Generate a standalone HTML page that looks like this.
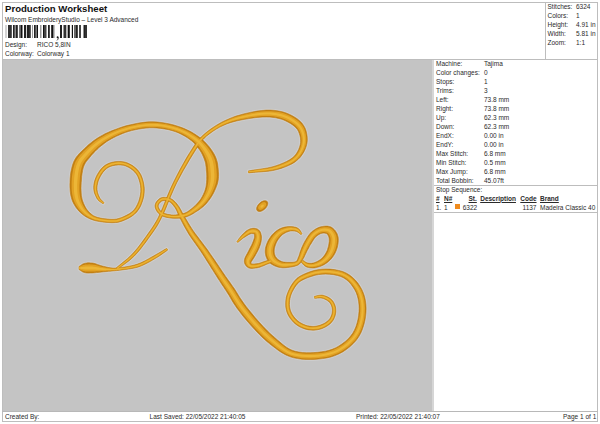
<!DOCTYPE html>
<html><head><meta charset="utf-8">
<style>
html,body{margin:0;padding:0;background:#fff;width:600px;height:424px;overflow:hidden;position:relative;font-family:"Liberation Sans",sans-serif;color:#2a2a2a}
.t{position:absolute;line-height:1;white-space:pre;font-size:6.5px}
.ln{position:absolute;background:#bdbdbd}
.u{text-decoration:underline;font-weight:bold}
</style></head><body>
<!-- lines -->
<div class="ln" style="left:2px;top:2px;width:596px;height:1px"></div>
<div class="ln" style="left:2px;top:421px;width:596px;height:1px"></div>
<div class="ln" style="left:2px;top:2px;width:1px;height:420px"></div>
<div class="ln" style="left:597px;top:2px;width:1px;height:420px"></div>
<div class="ln" style="left:545px;top:2px;width:1px;height:57px"></div>
<div class="ln" style="left:2px;top:59px;width:596px;height:1px"></div>
<div class="ln" style="left:434px;top:185px;width:164px;height:1px"></div>
<div class="ln" style="left:434px;top:212px;width:164px;height:1px"></div>
<div class="ln" style="left:2px;top:411px;width:596px;height:1px;background:#b8b8b8"></div>
<!-- gray design area -->
<div style="position:absolute;left:432px;top:60px;width:2px;height:351px;background:#d6d6d6"></div>
<div style="position:absolute;left:3px;top:60px;width:429px;height:351px;background:#c4c4c4;overflow:hidden">
<svg width="429" height="351" viewBox="3 60 429 351" style="position:absolute;left:0;top:0">
<g fill="#cfcfcf" stroke="#cfcfcf" stroke-width="2.6" stroke-linejoin="round"><path d="M104.1 202.6L103.3 201.9L102.5 201.2L101.8 200.5L101.1 199.8L100.5 199.1L99.9 198.3L99.3 197.0L98.6 195.6L98.0 194.1L97.5 192.5L97.2 190.9L97.0 189.4L97.0 187.6L97.1 185.8L97.5 183.9L97.9 182.1L98.5 180.2L99.3 178.4L100.3 176.4L101.6 174.3L103.0 172.2L104.6 170.4L106.3 168.8L108.1 167.5L110.2 166.5L112.7 165.7L115.4 165.2L118.2 164.9L120.9 165.0L123.3 165.3L125.7 166.0L128.1 167.1L130.5 168.5L132.8 170.2L134.7 172.0L136.4 174.0L137.8 176.4L138.9 179.2L139.8 182.3L140.5 185.5L140.8 188.7L140.8 191.8L140.4 194.9L139.7 198.1L138.7 201.4L137.4 204.4L135.9 207.3L134.2 209.7L132.1 211.7L129.7 213.5L126.9 215.1L124.0 216.5L121.2 217.7L118.5 218.5L116.7 219.0L114.9 219.2L113.1 219.3L111.2 219.3L109.3 219.2L107.3 219.0L105.0 218.8L102.7 218.5L100.3 218.0L97.9 217.5L95.8 216.8L93.8 215.9L92.3 214.9L90.9 213.8L89.5 212.6L88.3 211.3L87.2 209.9L86.2 208.5L85.2 206.8L84.3 205.1L83.5 203.2L82.8 201.3L82.2 199.4L81.8 197.6L81.4 195.4L81.2 193.1L81.1 190.7L81.0 188.1L81.1 185.4L81.2 182.8L81.5 179.8L81.7 176.6L82.1 173.5L82.6 170.6L83.2 167.9L84.0 165.7L84.6 164.4L85.3 163.1L86.1 161.8L87.2 160.4L88.4 159.0L89.7 157.4L91.3 155.4L93.1 153.4L95.0 151.5L97.0 149.5L99.0 147.6L101.0 145.9L103.0 144.4L104.9 142.9L106.9 141.5L109.0 140.2L111.2 138.9L113.5 137.7L116.3 136.3L119.2 135.0L122.2 133.7L125.3 132.5L128.5 131.5L131.7 130.6L135.2 129.8L138.8 129.1L142.4 128.5L146.0 128.1L149.6 127.8L153.2 127.8L157.0 128.0L160.8 128.4L164.7 129.0L168.6 129.7L172.3 130.7L175.7 131.8L178.7 133.0L181.6 134.4L184.4 135.9L187.1 137.6L189.5 139.3L191.8 141.0L193.5 142.5L195.0 144.1L196.5 145.7L197.8 147.4L199.0 149.1L200.2 150.8L201.3 152.6L202.3 154.5L203.2 156.5L204.0 158.4L204.6 160.2L205.2 161.9L205.5 163.2L205.7 164.5L205.9 165.9L206.1 167.3L206.2 168.9L206.3 170.5L206.5 172.1L206.6 173.6L206.7 175.1L206.7 176.5L206.7 177.9L206.7 179.3L206.6 180.9L206.5 182.5L206.3 184.2L206.1 185.9L205.8 187.6L205.3 189.3L204.8 191.1L204.0 192.9L203.2 194.7L202.3 196.5L201.3 198.2L200.3 199.8L199.2 201.2L198.0 202.6L196.7 204.0L195.3 205.4L193.9 206.7L192.5 207.9L191.2 209.0L189.9 210.0L188.7 210.9L187.5 211.7L186.2 212.5L184.8 213.1L182.8 213.7L180.6 214.3L178.2 214.6L175.8 214.9L173.5 215.0L171.4 214.9L169.5 214.6L167.6 214.3L165.8 213.8L164.1 213.3L162.7 212.6L161.5 211.8L160.6 210.9L159.8 209.9L159.1 208.7L158.5 207.6L158.2 206.5L158.2 205.7L158.4 205.0L158.8 204.1L159.5 203.1L160.3 202.2L161.2 201.4L162.0 201.0L162.9 200.7L164.0 200.5L165.3 200.6L166.7 200.7L168.0 201.1L169.1 201.5L170.1 202.1L171.2 202.9L172.1 203.9L173.1 205.1L174.1 206.4L175.0 207.6L175.8 208.9L176.5 210.3L177.2 211.8L177.9 213.5L178.6 215.2L179.5 217.1L180.8 219.6L182.2 222.3L183.7 225.2L185.3 228.1L187.0 231.0L188.7 233.9L190.7 237.0L192.8 240.0L195.0 243.1L197.1 246.1L199.2 249.0L201.1 251.8L202.7 254.2L204.2 256.6L205.7 258.9L207.1 261.2L208.6 263.6L210.1 265.9L211.6 268.4L213.2 270.8L214.7 273.3L216.3 275.8L217.8 278.2L219.4 280.6L220.8 282.8L222.2 284.9L223.6 286.9L224.9 289.0L226.3 291.1L227.6 293.2L229.1 295.5L230.4 297.8L231.8 300.2L233.3 302.7L235.0 305.3L236.8 307.9L239.5 311.5L242.3 315.2L245.4 319.0L248.6 322.7L251.7 326.3L254.7 329.6L257.2 332.2L259.5 334.6L261.9 336.9L264.3 339.2L266.8 341.4L269.4 343.6L272.4 345.9L275.5 348.3L278.7 350.7L282.2 352.9L285.8 354.9L289.6 356.6L293.6 357.8L297.7 358.6L301.9 359.2L306.1 359.5L310.2 359.5L314.3 359.4L318.4 359.1L322.6 358.6L326.8 357.9L331.0 356.9L335.1 355.6L338.9 353.9L342.7 351.9L346.3 349.5L349.8 346.8L353.0 343.8L356.0 340.6L358.5 337.1L360.7 333.3L362.4 329.2L363.8 324.9L364.9 320.6L365.6 316.3L366.0 312.1L366.1 308.3L365.9 304.4L365.4 300.6L364.6 296.8L363.4 293.2L361.9 289.7L360.1 286.5L358.0 283.3L355.5 280.3L352.7 277.6L349.8 275.2L346.5 273.2L342.7 271.5L338.7 270.4L334.4 269.6L330.1 269.1L325.8 269.0L321.7 269.2L317.8 269.7L313.8 270.6L309.9 271.8L306.2 273.2L302.8 274.7L300.0 276.2L298.4 277.3L297.0 278.3L295.8 279.5L294.7 280.7L293.7 281.9L292.7 283.3L291.4 285.3L290.1 287.6L288.9 290.0L287.8 292.5L286.9 295.1L286.2 297.6L285.9 300.0L285.7 302.4L285.7 304.9L285.8 307.3L286.3 309.7L286.9 312.0L287.8 314.3L289.0 316.5L290.4 318.6L292.0 320.5L293.7 322.4L295.5 324.0L297.4 325.4L299.5 326.7L301.8 327.8L304.1 328.7L306.4 329.4L308.7 329.9L310.9 330.1L313.2 330.2L315.5 330.1L317.7 329.7L319.9 329.2L322.0 328.6L323.9 327.7L325.9 326.7L327.8 325.5L329.6 324.2L331.2 322.7L332.5 321.1L333.6 319.4L334.4 317.6L335.1 315.8L335.5 313.9L335.8 312.0L335.8 310.2L335.7 308.5L335.4 306.8L334.9 305.1L334.2 303.4L333.4 301.9L332.4 300.5L331.1 299.3L329.6 298.1L327.9 297.1L326.2 296.3L324.5 295.7L322.8 295.2L321.3 295.1L319.8 295.2L318.3 295.4L317.0 295.8L315.7 296.1L314.4 296.3L314.6 298.3L316.0 298.2L317.4 298.1L318.7 298.0L319.9 297.9L321.1 298.0L322.2 298.2L323.5 298.6L325.0 299.2L326.4 299.9L327.7 300.8L328.9 301.7L329.8 302.7L330.5 303.7L331.2 304.9L331.7 306.2L332.0 307.5L332.3 308.9L332.4 310.2L332.3 311.7L332.1 313.2L331.7 314.8L331.1 316.3L330.4 317.7L329.7 318.9L328.6 320.2L327.3 321.3L325.7 322.5L324.1 323.5L322.3 324.3L320.6 325.0L318.9 325.6L317.0 326.0L315.1 326.3L313.1 326.4L311.2 326.3L309.3 326.1L307.3 325.7L305.3 325.1L303.3 324.3L301.4 323.3L299.5 322.2L297.9 321.0L296.4 319.6L294.9 318.1L293.5 316.3L292.3 314.5L291.3 312.6L290.5 310.8L290.0 308.9L289.6 306.9L289.4 304.7L289.5 302.6L289.6 300.5L290.0 298.4L290.5 296.2L291.3 293.9L292.3 291.7L293.5 289.5L294.7 287.4L295.9 285.7L296.9 284.5L297.8 283.4L298.7 282.5L299.7 281.7L300.9 280.9L302.2 280.2L304.8 278.9L307.9 277.6L311.4 276.4L315.0 275.3L318.6 274.6L322.1 274.2L325.8 274.1L329.7 274.3L333.6 274.7L337.4 275.5L340.9 276.6L343.9 278.0L346.4 279.7L348.8 281.8L351.0 284.3L352.9 286.9L354.7 289.7L356.1 292.5L357.2 295.4L358.0 298.4L358.6 301.7L359.0 305.0L359.1 308.4L359.0 311.7L358.6 315.4L358.0 319.2L357.1 323.0L355.9 326.7L354.4 330.2L352.7 333.3L350.6 336.1L348.1 338.9L345.3 341.4L342.2 343.8L339.0 345.9L335.9 347.7L332.6 349.1L329.1 350.3L325.4 351.2L321.6 351.8L317.7 352.3L313.9 352.6L310.1 352.7L306.3 352.7L302.5 352.5L298.8 352.0L295.3 351.3L292.0 350.2L289.0 348.8L286.0 346.9L283.1 344.7L280.2 342.3L277.4 339.9L274.6 337.4L272.1 335.3L269.8 333.2L267.6 331.1L265.4 328.8L263.2 326.5L260.9 324.0L258.0 320.8L254.9 317.3L251.9 313.6L248.9 310.0L246.1 306.4L243.6 303.1L241.9 300.6L240.3 298.3L238.8 295.9L237.4 293.6L235.9 291.2L234.4 288.8L232.9 286.7L231.4 284.6L230.0 282.5L228.5 280.5L227.1 278.5L225.6 276.4L224.0 274.1L222.4 271.7L220.8 269.3L219.2 266.9L217.6 264.5L215.9 262.1L214.4 259.8L212.8 257.5L211.2 255.2L209.6 252.9L208.0 250.6L206.3 248.2L204.2 245.4L202.0 242.5L199.7 239.5L197.5 236.6L195.3 233.7L193.3 230.9L191.5 228.2L189.8 225.5L188.1 222.7L186.5 220.0L184.9 217.4L183.5 214.9L182.5 213.3L181.7 211.6L180.9 210.0L180.0 208.5L179.1 206.9L178.0 205.4L177.0 204.1L175.9 202.8L174.7 201.5L173.4 200.3L172.0 199.3L170.5 198.5L168.9 197.9L167.3 197.6L165.6 197.4L163.9 197.3L162.2 197.5L160.6 198.0L159.3 198.8L158.1 199.9L157.0 201.1L156.0 202.5L155.4 203.9L155.0 205.5L155.1 207.1L155.6 208.7L156.3 210.3L157.2 211.7L158.3 213.1L159.5 214.2L161.1 215.3L162.9 216.2L164.9 216.9L166.9 217.4L169.0 217.8L171.0 218.1L173.4 218.3L176.0 218.3L178.6 218.2L181.2 217.9L183.7 217.5L186.0 216.9L187.8 216.3L189.5 215.6L191.1 214.8L192.6 213.9L194.1 213.0L195.5 212.1L197.2 211.0L198.9 209.9L200.7 208.6L202.4 207.3L204.1 205.8L205.7 204.2L207.2 202.5L208.7 200.6L210.1 198.7L211.4 196.7L212.6 194.7L213.7 192.7L214.6 190.8L215.5 188.8L216.3 186.8L217.1 184.8L217.7 182.8L218.1 180.7L218.4 178.7L218.5 176.7L218.6 174.8L218.5 173.0L218.4 171.2L218.3 169.5L218.1 167.8L217.9 166.0L217.7 164.1L217.3 162.2L216.7 160.2L216.0 158.1L215.0 155.8L213.8 153.5L212.4 151.3L211.0 149.2L209.4 147.1L207.8 145.2L206.1 143.3L204.4 141.5L202.5 139.8L200.5 138.1L198.4 136.5L196.2 135.0L193.5 133.3L190.6 131.6L187.5 130.1L184.3 128.6L181.0 127.3L177.7 126.2L173.9 125.0L169.9 124.0L165.8 123.2L161.6 122.5L157.5 122.0L153.4 121.8L149.4 121.8L145.5 122.1L141.6 122.6L137.7 123.2L134.0 124.0L130.3 124.8L126.8 125.6L123.4 126.6L120.0 127.7L116.7 128.9L113.6 130.1L110.5 131.3L107.9 132.5L105.4 133.6L103.0 134.9L100.6 136.2L98.3 137.6L96.0 139.1L93.5 140.8L91.1 142.7L88.7 144.6L86.4 146.7L84.3 148.7L82.3 150.6L80.8 152.1L79.3 153.6L77.9 155.2L76.4 157.0L75.1 159.1L73.8 161.5L72.6 164.7L71.7 168.2L70.9 171.8L70.4 175.4L70.1 178.9L70.0 182.2L69.9 185.3L70.0 188.3L70.2 191.4L70.6 194.5L71.3 197.5L72.2 200.4L73.3 202.9L74.6 205.3L76.0 207.5L77.6 209.5L79.2 211.4L81.0 213.1L82.7 214.5L84.4 215.8L86.3 217.0L88.2 218.0L90.1 218.9L92.2 219.7L94.5 220.5L97.0 221.1L99.6 221.6L102.2 221.9L104.7 222.2L107.1 222.4L109.1 222.5L111.1 222.7L113.1 222.7L115.2 222.6L117.3 222.4L119.5 221.9L122.4 221.0L125.4 219.7L128.6 218.2L131.6 216.4L134.4 214.3L136.8 211.9L138.9 209.1L140.6 206.0L142.0 202.5L143.1 199.0L143.9 195.5L144.2 192.0L144.3 188.6L143.9 185.0L143.2 181.5L142.2 178.1L140.9 174.8L139.2 172.0L137.3 169.6L135.0 167.5L132.5 165.6L129.7 164.0L126.9 162.7L124.1 161.9L121.2 161.5L118.1 161.4L114.9 161.7L111.9 162.3L109.0 163.2L106.3 164.5L104.1 166.0L102.0 168.0L100.2 170.1L98.6 172.4L97.2 174.7L96.1 177.0L95.3 179.0L94.6 181.1L94.1 183.3L93.8 185.4L93.7 187.6L93.8 189.6L94.1 191.5L94.6 193.4L95.3 195.1L96.1 196.8L96.9 198.4L97.9 199.7L98.7 200.7L99.6 201.4L100.5 202.1L101.4 202.6L102.3 203.2L103.1 203.8Z M79.0 269.5L79.8 270.0L80.6 270.6L81.4 271.1L82.2 271.7L83.1 272.1L84.0 272.5L85.3 272.8L86.6 273.0L87.9 273.1L89.2 273.1L90.5 273.0L91.7 273.0L93.2 272.9L94.8 272.8L96.5 272.6L98.2 272.4L100.0 272.2L101.8 272.0L103.5 271.8L105.2 271.7L107.0 271.5L108.7 271.3L110.4 271.2L112.0 271.0L113.3 270.9L114.5 270.8L115.6 270.7L116.8 270.6L118.0 270.4L119.5 270.2L122.1 269.9L125.2 269.5L128.5 269.1L131.9 268.5L135.3 267.8L138.5 266.9L141.4 265.8L144.3 264.5L147.1 263.1L149.9 261.6L152.5 260.1L155.0 258.6L157.3 257.2L159.5 255.8L161.6 254.4L163.6 252.9L165.7 251.5L167.7 250.0L166.7 248.4L164.5 249.6L162.3 250.9L160.2 252.2L158.0 253.5L155.8 254.7L153.6 256.0L151.0 257.4L148.4 258.9L145.7 260.4L143.0 261.8L140.3 263.0L137.5 264.1L134.5 265.0L131.3 265.8L128.0 266.4L124.8 267.0L121.8 267.4L119.1 267.8L117.8 267.9L116.6 268.0L115.4 268.1L114.3 268.1L113.2 268.1L112.0 268.0L110.5 267.8L108.9 267.6L107.2 267.2L105.6 266.8L103.9 266.4L102.2 266.0L100.6 265.5L99.0 265.0L97.4 264.4L95.7 263.8L94.0 263.3L92.3 263.0L90.7 262.9L89.2 262.8L87.8 262.8L86.4 263.0L85.2 263.2L84.0 263.5L83.1 263.9L82.2 264.3L81.4 264.9L80.6 265.4L79.8 266.0L79.0 266.5Z M117.6 269.3L120.4 267.1L123.2 265.1L126.0 263.0L128.8 260.9L131.6 258.5L134.3 256.0L137.3 252.8L140.3 249.3L143.1 245.6L145.9 241.9L148.5 238.2L150.9 234.9L152.7 232.4L154.2 230.2L155.7 228.0L157.2 225.7L158.6 223.2L160.2 220.3L162.8 215.0L165.5 208.9L168.2 202.3L171.0 195.5L173.9 188.8L176.8 182.6L179.9 176.8L183.1 170.8L186.5 165.0L189.7 159.4L192.9 154.3L195.7 149.8L197.2 147.5L198.5 145.4L199.7 143.6L200.9 141.8L202.3 140.1L204.0 138.4L206.6 136.0L209.6 133.7L212.9 131.3L216.3 129.1L219.8 127.1L223.3 125.4L226.7 123.9L230.2 122.7L233.7 121.7L237.3 120.8L241.0 120.0L244.8 119.3L249.0 118.6L253.3 117.9L257.8 117.4L262.1 117.1L266.2 117.0L270.0 117.1L273.0 117.4L275.8 117.8L278.5 118.4L281.1 119.1L283.6 120.0L285.9 121.0L288.2 122.2L290.5 123.5L292.6 124.9L294.5 126.4L296.1 128.0L297.4 129.5L298.4 131.3L299.2 133.3L299.9 135.5L300.4 137.9L300.6 140.1L300.6 142.3L300.3 144.5L299.6 146.9L298.7 149.4L297.5 151.8L296.1 154.0L294.5 156.0L292.2 158.0L289.6 159.8L286.5 161.5L283.2 163.0L279.7 164.4L276.1 165.7L272.0 166.9L267.5 167.9L262.8 168.7L258.0 169.4L253.1 170.1L248.4 170.9L248.6 172.9L253.4 172.4L258.3 172.1L263.2 171.7L268.0 171.3L272.8 170.6L277.3 169.5L281.1 168.4L284.8 167.1L288.4 165.6L291.9 163.9L295.1 161.9L297.9 159.6L300.2 157.3L302.1 154.7L303.8 152.0L305.2 149.1L306.3 146.1L307.0 143.1L307.3 140.2L307.2 137.1L306.8 134.1L306.1 131.1L305.1 128.2L303.6 125.5L301.8 122.9L299.5 120.7L297.1 118.7L294.4 117.0L291.8 115.5L289.1 114.2L286.2 113.0L283.2 112.0L280.1 111.3L277.0 110.7L273.7 110.3L270.4 110.1L266.1 110.1L261.6 110.5L257.0 111.1L252.4 111.9L247.9 112.9L243.6 113.9L239.8 115.0L236.0 116.1L232.4 117.4L228.7 118.9L225.2 120.5L221.7 122.2L218.2 124.2L214.6 126.4L211.1 128.8L207.8 131.3L204.7 133.8L202.0 136.2L200.1 138.1L198.5 139.9L197.1 141.7L195.7 143.6L194.3 145.6L192.7 148.0L189.9 152.4L186.7 157.6L183.5 163.3L180.2 169.2L177.0 175.3L174.0 181.2L171.0 187.6L168.1 194.3L165.4 201.1L162.7 207.7L160.1 213.7L157.6 218.9L156.0 221.7L154.6 224.1L153.2 226.3L151.7 228.5L150.2 230.7L148.5 233.1L146.1 236.5L143.5 240.1L140.8 243.8L138.0 247.4L135.1 250.9L132.3 254.0L129.8 256.5L127.2 258.9L124.5 261.1L121.8 263.3L119.1 265.5L116.4 267.7Z M237.7 242.4L238.9 241.5L240.2 240.5L241.4 239.5L242.5 238.6L243.7 237.7L244.9 237.0L246.1 236.2L247.3 235.4L248.5 234.7L249.6 234.2L250.6 233.8L251.5 233.6L252.1 233.6L252.9 233.7L253.6 233.8L254.2 234.0L254.5 234.2L254.6 234.3L254.4 234.3L254.5 234.5L254.5 235.0L254.5 235.6L254.5 236.3L254.5 237.0L254.4 237.8L254.1 238.8L253.7 239.9L253.3 241.1L252.8 242.3L252.3 243.5L251.7 244.9L251.0 246.2L250.3 247.6L249.5 249.1L248.7 250.7L248.0 252.1L247.4 253.3L246.6 254.6L245.9 256.0L245.1 257.6L244.5 259.4L244.3 261.2L244.5 262.7L244.9 263.9L245.5 265.1L246.3 266.1L247.2 267.0L248.5 267.8L250.1 268.3L251.8 268.4L253.5 268.3L255.2 268.1L256.8 267.9L258.3 267.6L259.8 267.2L261.4 266.6L262.9 266.0L264.3 265.4L265.6 264.8L266.8 264.3L267.6 264.0L268.5 263.7L269.2 263.4L270.0 263.0L270.7 262.7L271.5 262.4L270.5 259.6L269.7 259.8L268.9 260.1L268.1 260.3L267.3 260.5L266.5 260.8L265.6 261.1L264.3 261.5L262.9 262.0L261.5 262.5L260.1 263.0L258.8 263.4L257.5 263.6L256.2 263.8L254.7 263.9L253.3 264.0L252.1 263.9L251.3 263.7L250.9 263.4L251.0 263.3L251.0 263.0L251.0 262.6L251.1 262.2L251.2 261.8L251.3 261.8L251.5 261.4L251.9 260.8L252.5 259.9L253.3 258.7L254.2 257.3L255.0 255.9L255.8 254.4L256.6 253.0L257.5 251.4L258.3 249.8L259.1 248.1L259.7 246.5L260.2 245.0L260.7 243.4L261.0 241.9L261.3 240.3L261.5 238.6L261.5 237.0L261.4 235.8L261.1 234.6L260.8 233.3L260.3 232.1L259.6 230.9L258.4 229.7L257.1 228.9L255.7 228.5L254.3 228.3L253.0 228.3L251.6 228.5L250.3 228.8L248.8 229.4L247.4 230.2L246.1 231.1L244.9 232.2L243.8 233.2L242.7 234.2L241.6 235.4L240.6 236.6L239.6 237.9L238.7 239.1L237.8 240.4L236.9 241.6Z M301.9 233.8L301.5 232.9L301.0 232.1L300.5 231.1L299.9 230.2L299.2 229.3L298.2 228.5L297.0 227.8L295.8 227.3L294.4 227.0L293.0 226.7L291.6 226.6L290.1 226.6L288.4 226.6L286.6 226.8L284.7 227.1L282.8 227.6L281.0 228.2L279.2 229.1L277.3 230.2L275.6 231.5L274.0 232.9L272.4 234.5L271.0 236.2L269.8 238.0L268.6 239.8L267.6 241.8L266.7 243.9L266.0 246.1L265.4 248.3L265.2 250.5L265.2 252.5L265.5 254.4L265.9 256.2L266.6 258.0L267.4 259.8L268.6 261.4L270.0 262.9L271.6 264.2L273.3 265.2L275.1 266.1L276.9 266.7L278.7 267.3L280.5 267.6L282.4 267.8L284.2 267.8L286.0 267.7L287.7 267.5L289.3 267.3L290.8 267.1L292.3 266.8L293.9 266.5L295.5 266.0L297.1 265.4L298.5 264.7L299.6 263.8L300.6 262.8L301.3 261.7L302.0 260.7L302.6 259.8L303.1 258.8L303.8 257.7L304.4 256.5L304.9 255.3L305.5 254.1L306.0 253.0L306.5 251.9L307.2 250.6L307.9 249.3L308.6 248.0L309.3 246.6L310.0 245.3L310.8 244.1L311.7 242.7L312.5 241.2L313.4 239.9L314.3 238.6L315.2 237.5L316.1 236.6L317.0 235.8L318.1 235.0L319.1 234.4L320.2 233.8L321.2 233.4L322.2 233.2L323.2 233.1L324.3 233.1L325.3 233.3L326.2 233.5L326.9 233.8L327.2 234.1L327.4 234.4L327.8 234.8L328.1 235.5L328.5 236.3L328.8 237.1L329.0 237.8L329.1 238.5L329.2 239.4L329.2 240.4L329.2 241.6L329.0 242.8L328.9 244.0L328.6 245.3L328.3 246.7L327.9 248.1L327.5 249.5L327.0 250.9L326.4 252.1L325.7 253.3L325.0 254.5L324.2 255.6L323.3 256.7L322.4 257.7L321.4 258.7L320.3 259.6L319.0 260.5L317.6 261.3L316.1 262.0L314.8 262.5L313.5 262.9L312.5 263.1L311.4 263.3L310.4 263.3L309.4 263.2L308.4 263.1L307.5 262.9L306.9 262.7L306.2 262.4L305.4 262.0L304.6 261.4L303.8 260.9L302.9 260.3L301.3 262.3L302.0 263.0L302.6 263.7L303.3 264.5L304.1 265.3L305.0 266.0L306.1 266.7L307.3 267.2L308.6 267.5L310.0 267.8L311.4 267.9L312.8 268.0L314.3 267.9L316.1 267.6L318.0 267.1L319.9 266.5L321.7 265.8L323.5 264.9L325.2 263.9L326.7 262.9L328.2 261.8L329.6 260.5L330.9 259.2L332.1 257.8L333.2 256.3L334.3 254.6L335.2 252.9L336.0 251.1L336.7 249.3L337.3 247.4L337.7 245.6L338.0 244.0L338.2 242.3L338.3 240.6L338.3 238.8L338.1 237.0L337.6 235.2L337.0 233.6L336.2 232.2L335.3 230.7L334.1 229.4L332.8 228.2L331.2 227.1L329.3 226.4L327.5 226.1L325.7 226.1L324.0 226.2L322.4 226.5L320.8 226.8L319.1 227.3L317.5 228.0L316.0 228.8L314.5 229.7L313.1 230.7L311.7 231.8L310.3 233.2L309.1 234.7L308.0 236.2L307.0 237.8L306.1 239.3L305.2 240.7L304.4 242.2L303.6 243.7L302.9 245.2L302.3 246.6L301.6 248.1L301.1 249.5L300.6 250.8L300.1 252.1L299.8 253.3L299.4 254.5L299.1 255.5L298.7 256.6L298.2 257.6L297.9 258.6L297.5 259.5L297.1 260.3L296.7 260.9L296.3 261.3L295.5 261.7L294.4 262.0L293.2 262.2L291.8 262.3L290.4 262.3L288.9 262.3L287.4 262.3L285.9 262.2L284.4 262.1L283.1 261.9L281.8 261.6L280.7 261.1L279.7 260.5L278.5 259.8L277.5 258.9L276.6 258.0L275.9 257.2L275.4 256.4L275.1 255.7L274.8 254.8L274.5 253.9L274.3 252.9L274.2 251.8L274.2 250.9L274.3 249.6L274.5 248.2L274.9 246.7L275.4 245.1L276.0 243.5L276.6 242.0L277.4 240.7L278.3 239.3L279.3 237.9L280.4 236.7L281.5 235.5L282.6 234.5L283.7 233.8L285.0 233.0L286.4 232.3L287.8 231.8L289.1 231.3L290.5 231.0L291.6 230.9L292.7 230.9L293.7 231.0L294.8 231.1L295.7 231.3L296.6 231.5L297.2 231.8L297.9 232.2L298.7 232.7L299.4 233.3L300.2 234.0L301.1 234.6Z"/><ellipse cx="262.2" cy="206.1" rx="6.80" ry="3.90" transform="rotate(-43 262.2 206.1)"/></g>
<g fill="#c27f12" stroke="#c27f12" stroke-width="0.6"><path d="M104.1 202.6L103.3 201.9L102.5 201.2L101.8 200.5L101.1 199.8L100.5 199.1L99.9 198.3L99.3 197.0L98.6 195.6L98.0 194.1L97.5 192.5L97.2 190.9L97.0 189.4L97.0 187.6L97.1 185.8L97.5 183.9L97.9 182.1L98.5 180.2L99.3 178.4L100.3 176.4L101.6 174.3L103.0 172.2L104.6 170.4L106.3 168.8L108.1 167.5L110.2 166.5L112.7 165.7L115.4 165.2L118.2 164.9L120.9 165.0L123.3 165.3L125.7 166.0L128.1 167.1L130.5 168.5L132.8 170.2L134.7 172.0L136.4 174.0L137.8 176.4L138.9 179.2L139.8 182.3L140.5 185.5L140.8 188.7L140.8 191.8L140.4 194.9L139.7 198.1L138.7 201.4L137.4 204.4L135.9 207.3L134.2 209.7L132.1 211.7L129.7 213.5L126.9 215.1L124.0 216.5L121.2 217.7L118.5 218.5L116.7 219.0L114.9 219.2L113.1 219.3L111.2 219.3L109.3 219.2L107.3 219.0L105.0 218.8L102.7 218.5L100.3 218.0L97.9 217.5L95.8 216.8L93.8 215.9L92.3 214.9L90.9 213.8L89.5 212.6L88.3 211.3L87.2 209.9L86.2 208.5L85.2 206.8L84.3 205.1L83.5 203.2L82.8 201.3L82.2 199.4L81.8 197.6L81.4 195.4L81.2 193.1L81.1 190.7L81.0 188.1L81.1 185.4L81.2 182.8L81.5 179.8L81.7 176.6L82.1 173.5L82.6 170.6L83.2 167.9L84.0 165.7L84.6 164.4L85.3 163.1L86.1 161.8L87.2 160.4L88.4 159.0L89.7 157.4L91.3 155.4L93.1 153.4L95.0 151.5L97.0 149.5L99.0 147.6L101.0 145.9L103.0 144.4L104.9 142.9L106.9 141.5L109.0 140.2L111.2 138.9L113.5 137.7L116.3 136.3L119.2 135.0L122.2 133.7L125.3 132.5L128.5 131.5L131.7 130.6L135.2 129.8L138.8 129.1L142.4 128.5L146.0 128.1L149.6 127.8L153.2 127.8L157.0 128.0L160.8 128.4L164.7 129.0L168.6 129.7L172.3 130.7L175.7 131.8L178.7 133.0L181.6 134.4L184.4 135.9L187.1 137.6L189.5 139.3L191.8 141.0L193.5 142.5L195.0 144.1L196.5 145.7L197.8 147.4L199.0 149.1L200.2 150.8L201.3 152.6L202.3 154.5L203.2 156.5L204.0 158.4L204.6 160.2L205.2 161.9L205.5 163.2L205.7 164.5L205.9 165.9L206.1 167.3L206.2 168.9L206.3 170.5L206.5 172.1L206.6 173.6L206.7 175.1L206.7 176.5L206.7 177.9L206.7 179.3L206.6 180.9L206.5 182.5L206.3 184.2L206.1 185.9L205.8 187.6L205.3 189.3L204.8 191.1L204.0 192.9L203.2 194.7L202.3 196.5L201.3 198.2L200.3 199.8L199.2 201.2L198.0 202.6L196.7 204.0L195.3 205.4L193.9 206.7L192.5 207.9L191.2 209.0L189.9 210.0L188.7 210.9L187.5 211.7L186.2 212.5L184.8 213.1L182.8 213.7L180.6 214.3L178.2 214.6L175.8 214.9L173.5 215.0L171.4 214.9L169.5 214.6L167.6 214.3L165.8 213.8L164.1 213.3L162.7 212.6L161.5 211.8L160.6 210.9L159.8 209.9L159.1 208.7L158.5 207.6L158.2 206.5L158.2 205.7L158.4 205.0L158.8 204.1L159.5 203.1L160.3 202.2L161.2 201.4L162.0 201.0L162.9 200.7L164.0 200.5L165.3 200.6L166.7 200.7L168.0 201.1L169.1 201.5L170.1 202.1L171.2 202.9L172.1 203.9L173.1 205.1L174.1 206.4L175.0 207.6L175.8 208.9L176.5 210.3L177.2 211.8L177.9 213.5L178.6 215.2L179.5 217.1L180.8 219.6L182.2 222.3L183.7 225.2L185.3 228.1L187.0 231.0L188.7 233.9L190.7 237.0L192.8 240.0L195.0 243.1L197.1 246.1L199.2 249.0L201.1 251.8L202.7 254.2L204.2 256.6L205.7 258.9L207.1 261.2L208.6 263.6L210.1 265.9L211.6 268.4L213.2 270.8L214.7 273.3L216.3 275.8L217.8 278.2L219.4 280.6L220.8 282.8L222.2 284.9L223.6 286.9L224.9 289.0L226.3 291.1L227.6 293.2L229.1 295.5L230.4 297.8L231.8 300.2L233.3 302.7L235.0 305.3L236.8 307.9L239.5 311.5L242.3 315.2L245.4 319.0L248.6 322.7L251.7 326.3L254.7 329.6L257.2 332.2L259.5 334.6L261.9 336.9L264.3 339.2L266.8 341.4L269.4 343.6L272.4 345.9L275.5 348.3L278.7 350.7L282.2 352.9L285.8 354.9L289.6 356.6L293.6 357.8L297.7 358.6L301.9 359.2L306.1 359.5L310.2 359.5L314.3 359.4L318.4 359.1L322.6 358.6L326.8 357.9L331.0 356.9L335.1 355.6L338.9 353.9L342.7 351.9L346.3 349.5L349.8 346.8L353.0 343.8L356.0 340.6L358.5 337.1L360.7 333.3L362.4 329.2L363.8 324.9L364.9 320.6L365.6 316.3L366.0 312.1L366.1 308.3L365.9 304.4L365.4 300.6L364.6 296.8L363.4 293.2L361.9 289.7L360.1 286.5L358.0 283.3L355.5 280.3L352.7 277.6L349.8 275.2L346.5 273.2L342.7 271.5L338.7 270.4L334.4 269.6L330.1 269.1L325.8 269.0L321.7 269.2L317.8 269.7L313.8 270.6L309.9 271.8L306.2 273.2L302.8 274.7L300.0 276.2L298.4 277.3L297.0 278.3L295.8 279.5L294.7 280.7L293.7 281.9L292.7 283.3L291.4 285.3L290.1 287.6L288.9 290.0L287.8 292.5L286.9 295.1L286.2 297.6L285.9 300.0L285.7 302.4L285.7 304.9L285.8 307.3L286.3 309.7L286.9 312.0L287.8 314.3L289.0 316.5L290.4 318.6L292.0 320.5L293.7 322.4L295.5 324.0L297.4 325.4L299.5 326.7L301.8 327.8L304.1 328.7L306.4 329.4L308.7 329.9L310.9 330.1L313.2 330.2L315.5 330.1L317.7 329.7L319.9 329.2L322.0 328.6L323.9 327.7L325.9 326.7L327.8 325.5L329.6 324.2L331.2 322.7L332.5 321.1L333.6 319.4L334.4 317.6L335.1 315.8L335.5 313.9L335.8 312.0L335.8 310.2L335.7 308.5L335.4 306.8L334.9 305.1L334.2 303.4L333.4 301.9L332.4 300.5L331.1 299.3L329.6 298.1L327.9 297.1L326.2 296.3L324.5 295.7L322.8 295.2L321.3 295.1L319.8 295.2L318.3 295.4L317.0 295.8L315.7 296.1L314.4 296.3L314.6 298.3L316.0 298.2L317.4 298.1L318.7 298.0L319.9 297.9L321.1 298.0L322.2 298.2L323.5 298.6L325.0 299.2L326.4 299.9L327.7 300.8L328.9 301.7L329.8 302.7L330.5 303.7L331.2 304.9L331.7 306.2L332.0 307.5L332.3 308.9L332.4 310.2L332.3 311.7L332.1 313.2L331.7 314.8L331.1 316.3L330.4 317.7L329.7 318.9L328.6 320.2L327.3 321.3L325.7 322.5L324.1 323.5L322.3 324.3L320.6 325.0L318.9 325.6L317.0 326.0L315.1 326.3L313.1 326.4L311.2 326.3L309.3 326.1L307.3 325.7L305.3 325.1L303.3 324.3L301.4 323.3L299.5 322.2L297.9 321.0L296.4 319.6L294.9 318.1L293.5 316.3L292.3 314.5L291.3 312.6L290.5 310.8L290.0 308.9L289.6 306.9L289.4 304.7L289.5 302.6L289.6 300.5L290.0 298.4L290.5 296.2L291.3 293.9L292.3 291.7L293.5 289.5L294.7 287.4L295.9 285.7L296.9 284.5L297.8 283.4L298.7 282.5L299.7 281.7L300.9 280.9L302.2 280.2L304.8 278.9L307.9 277.6L311.4 276.4L315.0 275.3L318.6 274.6L322.1 274.2L325.8 274.1L329.7 274.3L333.6 274.7L337.4 275.5L340.9 276.6L343.9 278.0L346.4 279.7L348.8 281.8L351.0 284.3L352.9 286.9L354.7 289.7L356.1 292.5L357.2 295.4L358.0 298.4L358.6 301.7L359.0 305.0L359.1 308.4L359.0 311.7L358.6 315.4L358.0 319.2L357.1 323.0L355.9 326.7L354.4 330.2L352.7 333.3L350.6 336.1L348.1 338.9L345.3 341.4L342.2 343.8L339.0 345.9L335.9 347.7L332.6 349.1L329.1 350.3L325.4 351.2L321.6 351.8L317.7 352.3L313.9 352.6L310.1 352.7L306.3 352.7L302.5 352.5L298.8 352.0L295.3 351.3L292.0 350.2L289.0 348.8L286.0 346.9L283.1 344.7L280.2 342.3L277.4 339.9L274.6 337.4L272.1 335.3L269.8 333.2L267.6 331.1L265.4 328.8L263.2 326.5L260.9 324.0L258.0 320.8L254.9 317.3L251.9 313.6L248.9 310.0L246.1 306.4L243.6 303.1L241.9 300.6L240.3 298.3L238.8 295.9L237.4 293.6L235.9 291.2L234.4 288.8L232.9 286.7L231.4 284.6L230.0 282.5L228.5 280.5L227.1 278.5L225.6 276.4L224.0 274.1L222.4 271.7L220.8 269.3L219.2 266.9L217.6 264.5L215.9 262.1L214.4 259.8L212.8 257.5L211.2 255.2L209.6 252.9L208.0 250.6L206.3 248.2L204.2 245.4L202.0 242.5L199.7 239.5L197.5 236.6L195.3 233.7L193.3 230.9L191.5 228.2L189.8 225.5L188.1 222.7L186.5 220.0L184.9 217.4L183.5 214.9L182.5 213.3L181.7 211.6L180.9 210.0L180.0 208.5L179.1 206.9L178.0 205.4L177.0 204.1L175.9 202.8L174.7 201.5L173.4 200.3L172.0 199.3L170.5 198.5L168.9 197.9L167.3 197.6L165.6 197.4L163.9 197.3L162.2 197.5L160.6 198.0L159.3 198.8L158.1 199.9L157.0 201.1L156.0 202.5L155.4 203.9L155.0 205.5L155.1 207.1L155.6 208.7L156.3 210.3L157.2 211.7L158.3 213.1L159.5 214.2L161.1 215.3L162.9 216.2L164.9 216.9L166.9 217.4L169.0 217.8L171.0 218.1L173.4 218.3L176.0 218.3L178.6 218.2L181.2 217.9L183.7 217.5L186.0 216.9L187.8 216.3L189.5 215.6L191.1 214.8L192.6 213.9L194.1 213.0L195.5 212.1L197.2 211.0L198.9 209.9L200.7 208.6L202.4 207.3L204.1 205.8L205.7 204.2L207.2 202.5L208.7 200.6L210.1 198.7L211.4 196.7L212.6 194.7L213.7 192.7L214.6 190.8L215.5 188.8L216.3 186.8L217.1 184.8L217.7 182.8L218.1 180.7L218.4 178.7L218.5 176.7L218.6 174.8L218.5 173.0L218.4 171.2L218.3 169.5L218.1 167.8L217.9 166.0L217.7 164.1L217.3 162.2L216.7 160.2L216.0 158.1L215.0 155.8L213.8 153.5L212.4 151.3L211.0 149.2L209.4 147.1L207.8 145.2L206.1 143.3L204.4 141.5L202.5 139.8L200.5 138.1L198.4 136.5L196.2 135.0L193.5 133.3L190.6 131.6L187.5 130.1L184.3 128.6L181.0 127.3L177.7 126.2L173.9 125.0L169.9 124.0L165.8 123.2L161.6 122.5L157.5 122.0L153.4 121.8L149.4 121.8L145.5 122.1L141.6 122.6L137.7 123.2L134.0 124.0L130.3 124.8L126.8 125.6L123.4 126.6L120.0 127.7L116.7 128.9L113.6 130.1L110.5 131.3L107.9 132.5L105.4 133.6L103.0 134.9L100.6 136.2L98.3 137.6L96.0 139.1L93.5 140.8L91.1 142.7L88.7 144.6L86.4 146.7L84.3 148.7L82.3 150.6L80.8 152.1L79.3 153.6L77.9 155.2L76.4 157.0L75.1 159.1L73.8 161.5L72.6 164.7L71.7 168.2L70.9 171.8L70.4 175.4L70.1 178.9L70.0 182.2L69.9 185.3L70.0 188.3L70.2 191.4L70.6 194.5L71.3 197.5L72.2 200.4L73.3 202.9L74.6 205.3L76.0 207.5L77.6 209.5L79.2 211.4L81.0 213.1L82.7 214.5L84.4 215.8L86.3 217.0L88.2 218.0L90.1 218.9L92.2 219.7L94.5 220.5L97.0 221.1L99.6 221.6L102.2 221.9L104.7 222.2L107.1 222.4L109.1 222.5L111.1 222.7L113.1 222.7L115.2 222.6L117.3 222.4L119.5 221.9L122.4 221.0L125.4 219.7L128.6 218.2L131.6 216.4L134.4 214.3L136.8 211.9L138.9 209.1L140.6 206.0L142.0 202.5L143.1 199.0L143.9 195.5L144.2 192.0L144.3 188.6L143.9 185.0L143.2 181.5L142.2 178.1L140.9 174.8L139.2 172.0L137.3 169.6L135.0 167.5L132.5 165.6L129.7 164.0L126.9 162.7L124.1 161.9L121.2 161.5L118.1 161.4L114.9 161.7L111.9 162.3L109.0 163.2L106.3 164.5L104.1 166.0L102.0 168.0L100.2 170.1L98.6 172.4L97.2 174.7L96.1 177.0L95.3 179.0L94.6 181.1L94.1 183.3L93.8 185.4L93.7 187.6L93.8 189.6L94.1 191.5L94.6 193.4L95.3 195.1L96.1 196.8L96.9 198.4L97.9 199.7L98.7 200.7L99.6 201.4L100.5 202.1L101.4 202.6L102.3 203.2L103.1 203.8Z M79.0 269.5L79.8 270.0L80.6 270.6L81.4 271.1L82.2 271.7L83.1 272.1L84.0 272.5L85.3 272.8L86.6 273.0L87.9 273.1L89.2 273.1L90.5 273.0L91.7 273.0L93.2 272.9L94.8 272.8L96.5 272.6L98.2 272.4L100.0 272.2L101.8 272.0L103.5 271.8L105.2 271.7L107.0 271.5L108.7 271.3L110.4 271.2L112.0 271.0L113.3 270.9L114.5 270.8L115.6 270.7L116.8 270.6L118.0 270.4L119.5 270.2L122.1 269.9L125.2 269.5L128.5 269.1L131.9 268.5L135.3 267.8L138.5 266.9L141.4 265.8L144.3 264.5L147.1 263.1L149.9 261.6L152.5 260.1L155.0 258.6L157.3 257.2L159.5 255.8L161.6 254.4L163.6 252.9L165.7 251.5L167.7 250.0L166.7 248.4L164.5 249.6L162.3 250.9L160.2 252.2L158.0 253.5L155.8 254.7L153.6 256.0L151.0 257.4L148.4 258.9L145.7 260.4L143.0 261.8L140.3 263.0L137.5 264.1L134.5 265.0L131.3 265.8L128.0 266.4L124.8 267.0L121.8 267.4L119.1 267.8L117.8 267.9L116.6 268.0L115.4 268.1L114.3 268.1L113.2 268.1L112.0 268.0L110.5 267.8L108.9 267.6L107.2 267.2L105.6 266.8L103.9 266.4L102.2 266.0L100.6 265.5L99.0 265.0L97.4 264.4L95.7 263.8L94.0 263.3L92.3 263.0L90.7 262.9L89.2 262.8L87.8 262.8L86.4 263.0L85.2 263.2L84.0 263.5L83.1 263.9L82.2 264.3L81.4 264.9L80.6 265.4L79.8 266.0L79.0 266.5Z M117.6 269.3L120.4 267.1L123.2 265.1L126.0 263.0L128.8 260.9L131.6 258.5L134.3 256.0L137.3 252.8L140.3 249.3L143.1 245.6L145.9 241.9L148.5 238.2L150.9 234.9L152.7 232.4L154.2 230.2L155.7 228.0L157.2 225.7L158.6 223.2L160.2 220.3L162.8 215.0L165.5 208.9L168.2 202.3L171.0 195.5L173.9 188.8L176.8 182.6L179.9 176.8L183.1 170.8L186.5 165.0L189.7 159.4L192.9 154.3L195.7 149.8L197.2 147.5L198.5 145.4L199.7 143.6L200.9 141.8L202.3 140.1L204.0 138.4L206.6 136.0L209.6 133.7L212.9 131.3L216.3 129.1L219.8 127.1L223.3 125.4L226.7 123.9L230.2 122.7L233.7 121.7L237.3 120.8L241.0 120.0L244.8 119.3L249.0 118.6L253.3 117.9L257.8 117.4L262.1 117.1L266.2 117.0L270.0 117.1L273.0 117.4L275.8 117.8L278.5 118.4L281.1 119.1L283.6 120.0L285.9 121.0L288.2 122.2L290.5 123.5L292.6 124.9L294.5 126.4L296.1 128.0L297.4 129.5L298.4 131.3L299.2 133.3L299.9 135.5L300.4 137.9L300.6 140.1L300.6 142.3L300.3 144.5L299.6 146.9L298.7 149.4L297.5 151.8L296.1 154.0L294.5 156.0L292.2 158.0L289.6 159.8L286.5 161.5L283.2 163.0L279.7 164.4L276.1 165.7L272.0 166.9L267.5 167.9L262.8 168.7L258.0 169.4L253.1 170.1L248.4 170.9L248.6 172.9L253.4 172.4L258.3 172.1L263.2 171.7L268.0 171.3L272.8 170.6L277.3 169.5L281.1 168.4L284.8 167.1L288.4 165.6L291.9 163.9L295.1 161.9L297.9 159.6L300.2 157.3L302.1 154.7L303.8 152.0L305.2 149.1L306.3 146.1L307.0 143.1L307.3 140.2L307.2 137.1L306.8 134.1L306.1 131.1L305.1 128.2L303.6 125.5L301.8 122.9L299.5 120.7L297.1 118.7L294.4 117.0L291.8 115.5L289.1 114.2L286.2 113.0L283.2 112.0L280.1 111.3L277.0 110.7L273.7 110.3L270.4 110.1L266.1 110.1L261.6 110.5L257.0 111.1L252.4 111.9L247.9 112.9L243.6 113.9L239.8 115.0L236.0 116.1L232.4 117.4L228.7 118.9L225.2 120.5L221.7 122.2L218.2 124.2L214.6 126.4L211.1 128.8L207.8 131.3L204.7 133.8L202.0 136.2L200.1 138.1L198.5 139.9L197.1 141.7L195.7 143.6L194.3 145.6L192.7 148.0L189.9 152.4L186.7 157.6L183.5 163.3L180.2 169.2L177.0 175.3L174.0 181.2L171.0 187.6L168.1 194.3L165.4 201.1L162.7 207.7L160.1 213.7L157.6 218.9L156.0 221.7L154.6 224.1L153.2 226.3L151.7 228.5L150.2 230.7L148.5 233.1L146.1 236.5L143.5 240.1L140.8 243.8L138.0 247.4L135.1 250.9L132.3 254.0L129.8 256.5L127.2 258.9L124.5 261.1L121.8 263.3L119.1 265.5L116.4 267.7Z M237.7 242.4L238.9 241.5L240.2 240.5L241.4 239.5L242.5 238.6L243.7 237.7L244.9 237.0L246.1 236.2L247.3 235.4L248.5 234.7L249.6 234.2L250.6 233.8L251.5 233.6L252.1 233.6L252.9 233.7L253.6 233.8L254.2 234.0L254.5 234.2L254.6 234.3L254.4 234.3L254.5 234.5L254.5 235.0L254.5 235.6L254.5 236.3L254.5 237.0L254.4 237.8L254.1 238.8L253.7 239.9L253.3 241.1L252.8 242.3L252.3 243.5L251.7 244.9L251.0 246.2L250.3 247.6L249.5 249.1L248.7 250.7L248.0 252.1L247.4 253.3L246.6 254.6L245.9 256.0L245.1 257.6L244.5 259.4L244.3 261.2L244.5 262.7L244.9 263.9L245.5 265.1L246.3 266.1L247.2 267.0L248.5 267.8L250.1 268.3L251.8 268.4L253.5 268.3L255.2 268.1L256.8 267.9L258.3 267.6L259.8 267.2L261.4 266.6L262.9 266.0L264.3 265.4L265.6 264.8L266.8 264.3L267.6 264.0L268.5 263.7L269.2 263.4L270.0 263.0L270.7 262.7L271.5 262.4L270.5 259.6L269.7 259.8L268.9 260.1L268.1 260.3L267.3 260.5L266.5 260.8L265.6 261.1L264.3 261.5L262.9 262.0L261.5 262.5L260.1 263.0L258.8 263.4L257.5 263.6L256.2 263.8L254.7 263.9L253.3 264.0L252.1 263.9L251.3 263.7L250.9 263.4L251.0 263.3L251.0 263.0L251.0 262.6L251.1 262.2L251.2 261.8L251.3 261.8L251.5 261.4L251.9 260.8L252.5 259.9L253.3 258.7L254.2 257.3L255.0 255.9L255.8 254.4L256.6 253.0L257.5 251.4L258.3 249.8L259.1 248.1L259.7 246.5L260.2 245.0L260.7 243.4L261.0 241.9L261.3 240.3L261.5 238.6L261.5 237.0L261.4 235.8L261.1 234.6L260.8 233.3L260.3 232.1L259.6 230.9L258.4 229.7L257.1 228.9L255.7 228.5L254.3 228.3L253.0 228.3L251.6 228.5L250.3 228.8L248.8 229.4L247.4 230.2L246.1 231.1L244.9 232.2L243.8 233.2L242.7 234.2L241.6 235.4L240.6 236.6L239.6 237.9L238.7 239.1L237.8 240.4L236.9 241.6Z M301.9 233.8L301.5 232.9L301.0 232.1L300.5 231.1L299.9 230.2L299.2 229.3L298.2 228.5L297.0 227.8L295.8 227.3L294.4 227.0L293.0 226.7L291.6 226.6L290.1 226.6L288.4 226.6L286.6 226.8L284.7 227.1L282.8 227.6L281.0 228.2L279.2 229.1L277.3 230.2L275.6 231.5L274.0 232.9L272.4 234.5L271.0 236.2L269.8 238.0L268.6 239.8L267.6 241.8L266.7 243.9L266.0 246.1L265.4 248.3L265.2 250.5L265.2 252.5L265.5 254.4L265.9 256.2L266.6 258.0L267.4 259.8L268.6 261.4L270.0 262.9L271.6 264.2L273.3 265.2L275.1 266.1L276.9 266.7L278.7 267.3L280.5 267.6L282.4 267.8L284.2 267.8L286.0 267.7L287.7 267.5L289.3 267.3L290.8 267.1L292.3 266.8L293.9 266.5L295.5 266.0L297.1 265.4L298.5 264.7L299.6 263.8L300.6 262.8L301.3 261.7L302.0 260.7L302.6 259.8L303.1 258.8L303.8 257.7L304.4 256.5L304.9 255.3L305.5 254.1L306.0 253.0L306.5 251.9L307.2 250.6L307.9 249.3L308.6 248.0L309.3 246.6L310.0 245.3L310.8 244.1L311.7 242.7L312.5 241.2L313.4 239.9L314.3 238.6L315.2 237.5L316.1 236.6L317.0 235.8L318.1 235.0L319.1 234.4L320.2 233.8L321.2 233.4L322.2 233.2L323.2 233.1L324.3 233.1L325.3 233.3L326.2 233.5L326.9 233.8L327.2 234.1L327.4 234.4L327.8 234.8L328.1 235.5L328.5 236.3L328.8 237.1L329.0 237.8L329.1 238.5L329.2 239.4L329.2 240.4L329.2 241.6L329.0 242.8L328.9 244.0L328.6 245.3L328.3 246.7L327.9 248.1L327.5 249.5L327.0 250.9L326.4 252.1L325.7 253.3L325.0 254.5L324.2 255.6L323.3 256.7L322.4 257.7L321.4 258.7L320.3 259.6L319.0 260.5L317.6 261.3L316.1 262.0L314.8 262.5L313.5 262.9L312.5 263.1L311.4 263.3L310.4 263.3L309.4 263.2L308.4 263.1L307.5 262.9L306.9 262.7L306.2 262.4L305.4 262.0L304.6 261.4L303.8 260.9L302.9 260.3L301.3 262.3L302.0 263.0L302.6 263.7L303.3 264.5L304.1 265.3L305.0 266.0L306.1 266.7L307.3 267.2L308.6 267.5L310.0 267.8L311.4 267.9L312.8 268.0L314.3 267.9L316.1 267.6L318.0 267.1L319.9 266.5L321.7 265.8L323.5 264.9L325.2 263.9L326.7 262.9L328.2 261.8L329.6 260.5L330.9 259.2L332.1 257.8L333.2 256.3L334.3 254.6L335.2 252.9L336.0 251.1L336.7 249.3L337.3 247.4L337.7 245.6L338.0 244.0L338.2 242.3L338.3 240.6L338.3 238.8L338.1 237.0L337.6 235.2L337.0 233.6L336.2 232.2L335.3 230.7L334.1 229.4L332.8 228.2L331.2 227.1L329.3 226.4L327.5 226.1L325.7 226.1L324.0 226.2L322.4 226.5L320.8 226.8L319.1 227.3L317.5 228.0L316.0 228.8L314.5 229.7L313.1 230.7L311.7 231.8L310.3 233.2L309.1 234.7L308.0 236.2L307.0 237.8L306.1 239.3L305.2 240.7L304.4 242.2L303.6 243.7L302.9 245.2L302.3 246.6L301.6 248.1L301.1 249.5L300.6 250.8L300.1 252.1L299.8 253.3L299.4 254.5L299.1 255.5L298.7 256.6L298.2 257.6L297.9 258.6L297.5 259.5L297.1 260.3L296.7 260.9L296.3 261.3L295.5 261.7L294.4 262.0L293.2 262.2L291.8 262.3L290.4 262.3L288.9 262.3L287.4 262.3L285.9 262.2L284.4 262.1L283.1 261.9L281.8 261.6L280.7 261.1L279.7 260.5L278.5 259.8L277.5 258.9L276.6 258.0L275.9 257.2L275.4 256.4L275.1 255.7L274.8 254.8L274.5 253.9L274.3 252.9L274.2 251.8L274.2 250.9L274.3 249.6L274.5 248.2L274.9 246.7L275.4 245.1L276.0 243.5L276.6 242.0L277.4 240.7L278.3 239.3L279.3 237.9L280.4 236.7L281.5 235.5L282.6 234.5L283.7 233.8L285.0 233.0L286.4 232.3L287.8 231.8L289.1 231.3L290.5 231.0L291.6 230.9L292.7 230.9L293.7 231.0L294.8 231.1L295.7 231.3L296.6 231.5L297.2 231.8L297.9 232.2L298.7 232.7L299.4 233.3L300.2 234.0L301.1 234.6Z"/><ellipse cx="262.2" cy="206.1" rx="6.80" ry="3.90" transform="rotate(-43 262.2 206.1)"/></g>
<g fill="#e2a224"><path d="M103.9 202.8L103.2 202.1L102.4 201.4L101.6 200.7L100.9 200.0L100.2 199.3L99.6 198.5L98.9 197.2L98.2 195.8L97.6 194.3L97.1 192.6L96.7 191.0L96.5 189.4L96.5 187.6L96.6 185.8L97.0 183.8L97.4 181.9L98.0 180.0L98.8 178.2L99.9 176.1L101.1 174.0L102.6 171.9L104.2 170.0L106.0 168.4L107.8 167.1L110.0 166.0L112.6 165.2L115.4 164.6L118.2 164.4L120.9 164.4L123.4 164.8L125.9 165.5L128.4 166.6L130.8 168.1L133.1 169.8L135.1 171.7L136.8 173.7L138.2 176.2L139.4 179.0L140.3 182.2L141.0 185.5L141.3 188.7L141.3 191.8L140.9 195.0L140.2 198.3L139.2 201.5L137.9 204.7L136.4 207.5L134.6 210.0L132.5 212.1L130.0 213.9L127.2 215.6L124.2 217.0L121.3 218.1L118.7 219.0L116.8 219.5L114.9 219.7L113.1 219.8L111.2 219.8L109.3 219.7L107.3 219.5L105.0 219.3L102.6 219.0L100.2 218.6L97.8 218.0L95.6 217.3L93.6 216.5L92.0 215.5L90.5 214.4L89.1 213.3L87.8 212.0L86.6 210.6L85.4 209.2L84.3 207.5L83.3 205.8L82.4 203.9L81.6 201.9L80.9 200.0L80.4 198.0L79.9 195.7L79.6 193.3L79.4 190.8L79.4 188.1L79.4 185.4L79.6 182.7L79.8 179.6L80.0 176.5L80.5 173.3L81.0 170.2L81.7 167.5L82.5 165.1L83.1 163.6L84.0 162.2L84.9 160.8L86.0 159.4L87.2 157.9L88.6 156.4L90.3 154.4L92.1 152.4L94.1 150.4L96.1 148.5L98.2 146.6L100.3 144.9L102.3 143.3L104.3 141.9L106.3 140.5L108.5 139.2L110.7 137.9L113.0 136.7L115.9 135.4L118.8 134.0L121.9 132.8L125.0 131.7L128.3 130.6L131.5 129.7L135.0 128.9L138.6 128.2L142.3 127.6L145.9 127.2L149.6 126.9L153.3 126.9L157.1 127.1L161.0 127.5L164.9 128.1L168.8 128.9L172.5 129.9L176.0 131.0L179.1 132.2L182.0 133.5L184.9 135.1L187.6 136.7L190.1 138.4L192.5 140.1L194.2 141.6L195.9 143.2L197.4 144.8L198.8 146.5L200.1 148.2L201.3 150.0L202.5 151.8L203.6 153.7L204.6 155.7L205.4 157.6L206.2 159.5L206.8 161.3L207.2 162.7L207.5 164.2L207.7 165.6L207.8 167.1L208.0 168.7L208.1 170.4L208.3 172.0L208.4 173.5L208.4 175.1L208.5 176.6L208.5 178.0L208.4 179.5L208.3 181.2L208.1 182.9L207.8 184.6L207.5 186.3L207.1 188.1L206.6 189.8L205.9 191.6L205.1 193.5L204.2 195.3L203.3 197.1L202.2 198.8L201.1 200.4L200.0 201.9L198.7 203.3L197.3 204.7L195.9 206.1L194.4 207.3L192.9 208.5L191.6 209.6L190.3 210.6L189.1 211.5L187.8 212.3L186.4 213.1L185.0 213.7L182.9 214.3L180.7 214.8L178.3 215.2L175.9 215.4L173.5 215.5L171.3 215.4L169.4 215.1L167.5 214.8L165.6 214.3L163.9 213.7L162.4 213.0L161.2 212.1L160.3 211.2L159.4 210.1L158.7 209.0L158.1 207.7L157.8 206.6L157.7 205.7L157.9 204.8L158.4 203.8L159.1 202.8L160.0 201.8L160.9 201.0L161.8 200.5L162.8 200.2L164.0 200.1L165.4 200.1L166.8 200.3L168.1 200.6L169.3 201.1L170.4 201.7L171.5 202.5L172.5 203.6L173.5 204.8L174.5 206.0L175.4 207.3L176.3 208.6L177.0 210.0L177.7 211.6L178.4 213.2L179.2 214.9L180.1 216.7L181.4 219.3L182.9 222.0L184.4 224.8L186.0 227.7L187.7 230.6L189.4 233.5L191.4 236.5L193.5 239.5L195.7 242.5L197.8 245.5L199.9 248.4L201.9 251.3L203.5 253.7L205.0 256.0L206.5 258.4L208.0 260.7L209.4 263.0L211.0 265.3L212.5 267.8L214.1 270.2L215.6 272.7L217.2 275.1L218.8 277.6L220.3 280.0L221.7 282.1L223.1 284.2L224.5 286.3L225.9 288.3L227.3 290.4L228.7 292.5L230.1 294.8L231.5 297.1L232.9 299.5L234.4 302.0L236.0 304.6L237.8 307.2L240.4 310.7L243.3 314.4L246.4 318.2L249.5 321.9L252.7 325.5L255.7 328.8L258.1 331.3L260.4 333.7L262.7 336.1L265.1 338.3L267.6 340.5L270.2 342.6L273.1 345.0L276.2 347.4L279.4 349.8L282.7 352.0L286.3 354.0L290.0 355.6L293.8 356.8L297.9 357.6L302.0 358.2L306.1 358.5L310.2 358.5L314.2 358.4L318.3 358.1L322.4 357.6L326.6 356.9L330.7 355.9L334.7 354.6L338.5 353.0L342.1 351.0L345.7 348.6L349.1 346.0L352.3 343.1L355.2 339.9L357.7 336.5L359.7 332.8L361.5 328.8L362.8 324.6L363.9 320.4L364.6 316.1L364.9 312.1L365.0 308.3L364.8 304.5L364.4 300.7L363.6 297.0L362.5 293.5L361.1 290.1L359.3 287.0L357.2 283.9L354.8 280.9L352.2 278.2L349.2 275.9L346.1 273.9L342.5 272.3L338.5 271.1L334.3 270.3L330.0 269.9L325.8 269.8L321.8 270.0L317.9 270.5L314.0 271.3L310.1 272.5L306.4 273.9L303.1 275.3L300.3 276.8L298.8 277.8L297.4 278.9L296.2 279.9L295.2 281.1L294.2 282.3L293.2 283.7L291.9 285.7L290.6 287.9L289.4 290.2L288.3 292.7L287.4 295.3L286.8 297.7L286.4 300.1L286.2 302.5L286.2 304.9L286.4 307.3L286.8 309.6L287.4 311.8L288.4 314.0L289.5 316.2L290.9 318.2L292.4 320.2L294.1 322.0L295.9 323.5L297.8 324.9L299.8 326.2L302.0 327.2L304.3 328.1L306.5 328.8L308.8 329.3L311.0 329.6L313.2 329.6L315.4 329.5L317.6 329.2L319.7 328.7L321.8 328.0L323.7 327.2L325.6 326.2L327.5 325.1L329.2 323.8L330.8 322.3L332.1 320.7L333.1 319.2L333.9 317.4L334.6 315.6L335.0 313.8L335.3 311.9L335.3 310.2L335.2 308.5L334.9 306.9L334.4 305.2L333.8 303.7L333.0 302.2L332.0 300.9L330.8 299.6L329.3 298.5L327.7 297.5L326.0 296.7L324.4 296.1L322.7 295.7L321.2 295.5L319.8 295.6L318.4 295.8L317.0 296.1L315.7 296.4L314.4 296.6L314.6 298.0L315.9 297.9L317.3 297.7L318.6 297.6L319.9 297.5L321.1 297.5L322.3 297.7L323.7 298.2L325.1 298.8L326.6 299.5L328.0 300.4L329.2 301.3L330.2 302.3L331.0 303.4L331.6 304.7L332.1 306.0L332.5 307.4L332.8 308.8L332.9 310.2L332.8 311.7L332.6 313.3L332.2 314.9L331.6 316.5L330.9 318.0L330.1 319.3L329.0 320.5L327.6 321.8L326.0 322.9L324.3 323.9L322.6 324.8L320.8 325.6L319.0 326.1L317.1 326.5L315.1 326.8L313.1 327.0L311.1 326.9L309.2 326.7L307.2 326.3L305.1 325.6L303.1 324.8L301.1 323.8L299.2 322.7L297.5 321.5L296.0 320.1L294.4 318.4L293.0 316.7L291.8 314.8L290.8 312.9L290.0 311.0L289.4 309.0L289.0 306.9L288.9 304.8L288.9 302.6L289.1 300.4L289.4 298.3L290.0 296.0L290.8 293.7L291.8 291.4L293.0 289.2L294.2 287.1L295.4 285.3L296.4 284.1L297.3 283.0L298.3 282.1L299.3 281.2L300.5 280.4L301.9 279.6L304.5 278.2L307.7 276.9L311.1 275.7L314.8 274.6L318.5 273.9L322.0 273.4L325.8 273.3L329.7 273.5L333.7 274.0L337.6 274.7L341.2 275.8L344.3 277.3L346.9 279.0L349.4 281.2L351.6 283.7L353.7 286.4L355.5 289.2L356.9 292.1L358.1 295.0L359.0 298.2L359.6 301.5L360.0 304.9L360.2 308.3L360.1 311.7L359.7 315.5L359.0 319.4L358.1 323.3L356.9 327.1L355.3 330.7L353.5 333.9L351.4 336.8L348.8 339.6L345.9 342.2L342.8 344.7L339.6 346.8L336.3 348.6L333.0 350.1L329.4 351.3L325.6 352.2L321.7 352.9L317.8 353.3L314.0 353.6L310.2 353.8L306.3 353.7L302.4 353.5L298.6 353.0L295.0 352.3L291.6 351.2L288.5 349.7L285.4 347.8L282.4 345.6L279.5 343.2L276.6 340.8L273.8 338.4L271.3 336.2L269.0 334.1L266.7 331.9L264.5 329.7L262.3 327.3L259.9 324.8L257.0 321.6L254.0 318.1L250.9 314.4L247.9 310.7L245.1 307.2L242.6 303.8L240.8 301.3L239.3 298.9L237.8 296.6L236.3 294.2L234.9 291.8L233.3 289.5L231.9 287.3L230.4 285.2L229.0 283.2L227.6 281.2L226.1 279.1L224.7 277.0L223.1 274.7L221.5 272.3L219.9 269.9L218.3 267.5L216.7 265.1L215.0 262.7L213.5 260.3L211.9 258.1L210.4 255.8L208.8 253.5L207.2 251.1L205.5 248.7L203.4 245.9L201.2 243.0L199.0 240.1L196.8 237.1L194.6 234.2L192.6 231.3L190.8 228.6L189.1 225.9L187.4 223.1L185.8 220.3L184.3 217.7L182.9 215.3L182.0 213.6L181.1 211.9L180.3 210.3L179.5 208.7L178.6 207.2L177.6 205.7L176.5 204.4L175.5 203.1L174.3 201.9L173.1 200.7L171.7 199.7L170.3 198.9L168.8 198.4L167.2 198.0L165.5 197.8L163.9 197.8L162.3 198.0L160.8 198.5L159.6 199.2L158.4 200.2L157.3 201.4L156.5 202.7L155.8 204.1L155.5 205.5L155.6 207.0L156.0 208.5L156.7 210.0L157.6 211.4L158.6 212.7L159.8 213.9L161.3 214.9L163.1 215.8L165.0 216.5L167.0 217.0L169.1 217.4L171.1 217.6L173.5 217.8L176.0 217.8L178.6 217.7L181.1 217.3L183.6 216.9L185.8 216.3L187.6 215.7L189.2 215.0L190.7 214.2L192.2 213.3L193.6 212.4L195.1 211.5L196.7 210.4L198.4 209.2L200.1 207.9L201.7 206.6L203.4 205.1L204.9 203.6L206.4 201.8L207.7 200.0L209.0 198.1L210.3 196.2L211.4 194.2L212.4 192.2L213.3 190.3L214.1 188.4L214.8 186.4L215.5 184.5L216.0 182.5L216.4 180.5L216.6 178.6L216.8 176.7L216.8 174.9L216.7 173.1L216.6 171.3L216.5 169.6L216.3 167.9L216.1 166.2L215.9 164.4L215.5 162.5L215.1 160.6L214.4 158.7L213.5 156.5L212.3 154.3L211.1 152.1L209.7 150.0L208.2 147.9L206.7 146.0L205.1 144.2L203.4 142.4L201.6 140.6L199.7 139.0L197.7 137.4L195.5 135.9L192.9 134.2L190.0 132.5L187.0 131.0L183.9 129.5L180.7 128.2L177.4 127.0L173.6 125.9L169.7 124.9L165.6 124.0L161.5 123.4L157.4 122.9L153.3 122.7L149.4 122.7L145.6 123.0L141.7 123.5L137.9 124.1L134.1 124.9L130.5 125.7L127.1 126.5L123.7 127.5L120.4 128.6L117.1 129.8L114.0 131.0L111.0 132.3L108.4 133.4L106.0 134.6L103.6 135.9L101.3 137.2L99.0 138.6L96.7 140.1L94.3 141.8L92.0 143.7L89.7 145.7L87.4 147.7L85.3 149.7L83.4 151.6L81.9 153.2L80.5 154.6L79.1 156.2L77.8 157.9L76.5 159.9L75.3 162.1L74.2 165.2L73.3 168.5L72.6 172.0L72.1 175.6L71.8 179.0L71.6 182.3L71.6 185.3L71.6 188.3L71.8 191.3L72.2 194.3L72.8 197.2L73.6 200.0L74.6 202.4L75.8 204.7L77.1 206.8L78.6 208.9L80.1 210.7L81.8 212.4L83.3 213.9L85.0 215.2L86.8 216.3L88.6 217.4L90.5 218.3L92.4 219.1L94.7 219.9L97.2 220.5L99.7 221.0L102.2 221.4L104.7 221.7L107.1 221.9L109.1 222.0L111.1 222.2L113.1 222.2L115.1 222.1L117.2 221.9L119.3 221.4L122.2 220.5L125.2 219.2L128.3 217.7L131.3 216.0L134.1 213.9L136.4 211.6L138.4 208.8L140.1 205.7L141.5 202.4L142.6 198.9L143.3 195.4L143.7 192.0L143.7 188.6L143.4 185.1L142.7 181.6L141.7 178.2L140.4 175.1L138.8 172.3L136.9 170.0L134.7 167.9L132.2 166.0L129.5 164.5L126.7 163.2L124.0 162.4L121.1 162.0L118.1 161.9L115.0 162.2L112.0 162.8L109.1 163.7L106.6 164.9L104.4 166.4L102.4 168.3L100.6 170.4L99.1 172.7L97.7 175.0L96.6 177.2L95.8 179.2L95.1 181.3L94.6 183.4L94.3 185.5L94.2 187.6L94.3 189.6L94.6 191.4L95.1 193.2L95.7 195.0L96.4 196.6L97.3 198.2L98.2 199.5L99.0 200.4L99.8 201.2L100.7 201.8L101.6 202.4L102.4 203.0L103.3 203.6Z M79.0 269.1L79.8 269.4L80.6 269.8L81.4 270.2L82.2 270.6L83.1 270.9L84.0 271.1L85.3 271.4L86.6 271.5L87.9 271.5L89.2 271.5L90.5 271.5L91.8 271.5L93.3 271.5L94.9 271.4L96.6 271.3L98.3 271.3L100.1 271.2L101.8 271.1L103.5 271.0L105.3 270.9L107.0 270.8L108.7 270.8L110.4 270.7L112.0 270.5L113.3 270.5L114.4 270.4L115.6 270.3L116.7 270.2L118.0 270.0L119.4 269.9L122.1 269.5L125.1 269.2L128.4 268.7L131.8 268.1L135.2 267.4L138.3 266.5L141.3 265.4L144.1 264.1L146.9 262.7L149.6 261.2L152.3 259.7L154.8 258.2L157.1 256.9L159.2 255.5L161.4 254.0L163.4 252.6L165.5 251.2L167.6 249.8L166.8 248.6L164.7 249.9L162.5 251.2L160.4 252.5L158.2 253.8L156.0 255.1L153.8 256.4L151.2 257.8L148.6 259.3L145.9 260.8L143.2 262.2L140.4 263.4L137.7 264.5L134.6 265.4L131.4 266.2L128.1 266.8L124.8 267.4L121.8 267.8L119.2 268.1L117.8 268.3L116.6 268.4L115.5 268.5L114.4 268.5L113.2 268.5L112.0 268.5L110.4 268.3L108.8 268.1L107.2 267.9L105.5 267.6L103.8 267.2L102.2 266.9L100.6 266.5L98.9 266.1L97.3 265.6L95.6 265.1L93.9 264.8L92.2 264.5L90.7 264.4L89.2 264.3L87.8 264.4L86.4 264.5L85.2 264.6L84.0 264.9L83.1 265.1L82.2 265.4L81.4 265.8L80.6 266.2L79.8 266.6L79.0 266.9Z M117.4 269.0L120.2 266.9L123.0 264.8L125.8 262.7L128.6 260.6L131.3 258.2L134.0 255.7L137.0 252.5L139.9 249.0L142.8 245.3L145.6 241.6L148.2 238.0L150.6 234.6L152.3 232.2L153.9 229.9L155.3 227.7L156.8 225.4L158.3 222.9L159.8 220.1L162.4 214.8L165.1 208.7L167.8 202.1L170.6 195.3L173.4 188.7L176.4 182.4L179.4 176.5L182.7 170.6L186.0 164.7L189.3 159.1L192.4 154.0L195.2 149.6L196.7 147.2L198.1 145.2L199.3 143.3L200.6 141.5L202.0 139.8L203.7 138.1L206.4 135.7L209.4 133.3L212.6 131.0L216.1 128.7L219.6 126.7L223.0 124.9L226.5 123.4L230.0 122.1L233.5 121.0L237.1 120.1L240.8 119.2L244.6 118.5L248.8 117.7L253.2 117.0L257.6 116.5L262.0 116.1L266.2 115.9L270.1 116.0L273.1 116.3L276.0 116.8L278.8 117.3L281.4 118.1L284.0 118.9L286.4 120.0L288.7 121.2L291.1 122.5L293.3 124.0L295.3 125.5L297.0 127.2L298.3 128.9L299.4 130.8L300.3 133.0L301.0 135.3L301.4 137.7L301.6 140.1L301.5 142.4L301.2 144.8L300.5 147.3L299.5 149.8L298.2 152.2L296.7 154.5L295.0 156.5L292.7 158.6L289.9 160.5L286.8 162.1L283.4 163.6L279.9 165.0L276.3 166.3L272.1 167.5L267.6 168.4L262.9 169.1L258.0 169.8L253.2 170.5L248.4 171.2L248.6 172.6L253.4 172.1L258.2 171.7L263.1 171.3L268.0 170.8L272.6 170.0L277.1 168.9L280.8 167.8L284.6 166.5L288.1 165.0L291.5 163.3L294.7 161.3L297.4 159.1L299.5 156.8L301.4 154.3L303.1 151.6L304.4 148.8L305.4 145.9L306.1 143.0L306.3 140.1L306.2 137.2L305.8 134.3L305.1 131.4L304.1 128.6L302.7 126.1L300.9 123.7L298.8 121.6L296.4 119.7L293.8 118.0L291.2 116.5L288.6 115.2L285.8 114.1L282.9 113.1L279.9 112.3L276.8 111.8L273.6 111.4L270.3 111.2L266.1 111.2L261.6 111.5L257.1 112.1L252.5 112.8L248.0 113.7L243.8 114.7L240.0 115.7L236.2 116.8L232.6 118.1L229.0 119.5L225.4 121.0L222.0 122.7L218.4 124.7L214.9 126.8L211.4 129.2L208.1 131.6L205.0 134.1L202.3 136.5L200.4 138.4L198.9 140.2L197.5 142.0L196.1 143.8L194.7 145.9L193.2 148.2L190.3 152.7L187.2 157.9L183.9 163.5L180.6 169.5L177.4 175.5L174.4 181.4L171.4 187.7L168.6 194.5L165.8 201.3L163.1 207.9L160.5 213.9L158.0 219.1L156.4 221.9L155.0 224.3L153.6 226.6L152.1 228.7L150.6 231.0L148.8 233.4L146.5 236.8L143.9 240.4L141.1 244.0L138.3 247.7L135.5 251.2L132.6 254.3L130.0 256.8L127.4 259.2L124.7 261.4L122.0 263.5L119.3 265.7L116.6 268.0Z M237.6 242.3L238.8 241.3L239.9 240.3L241.1 239.3L242.2 238.3L243.4 237.4L244.6 236.5L245.8 235.7L247.0 234.9L248.2 234.2L249.3 233.6L250.4 233.1L251.3 232.9L252.1 232.9L252.9 232.9L253.7 233.0L254.4 233.2L254.9 233.4L255.1 233.6L255.2 233.8L255.3 234.2L255.5 234.7L255.5 235.5L255.6 236.2L255.6 237.0L255.4 237.9L255.2 239.0L254.8 240.2L254.4 241.4L253.9 242.7L253.4 244.0L252.8 245.4L252.1 246.8L251.4 248.2L250.6 249.7L249.8 251.2L249.0 252.7L248.4 253.9L247.6 255.2L246.8 256.6L246.1 258.0L245.5 259.7L245.4 261.3L245.5 262.6L245.9 263.7L246.4 264.7L247.0 265.6L247.8 266.4L248.9 267.1L250.3 267.6L251.9 267.7L253.5 267.7L255.1 267.5L256.7 267.3L258.2 267.0L259.7 266.6L261.2 266.1L262.7 265.5L264.1 264.9L265.4 264.3L266.6 263.8L267.5 263.5L268.3 263.2L269.1 262.9L269.8 262.6L270.6 262.3L271.4 262.0L270.6 260.0L269.9 260.3L269.1 260.5L268.3 260.7L267.5 261.0L266.7 261.3L265.8 261.6L264.5 262.0L263.1 262.5L261.7 263.1L260.3 263.6L259.0 264.0L257.6 264.2L256.3 264.4L254.8 264.6L253.3 264.6L252.1 264.6L251.1 264.4L250.5 264.1L250.5 263.8L250.3 263.5L250.2 263.0L250.2 262.5L250.2 262.0L250.2 261.7L250.4 261.1L250.9 260.3L251.5 259.3L252.3 258.1L253.2 256.7L254.0 255.3L254.8 253.9L255.6 252.4L256.4 250.9L257.2 249.3L258.0 247.6L258.6 246.0L259.1 244.6L259.6 243.1L260.0 241.6L260.3 240.0L260.4 238.5L260.4 237.0L260.3 235.9L260.2 234.7L259.9 233.6L259.4 232.5L258.8 231.4L257.9 230.4L256.7 229.7L255.5 229.3L254.2 229.2L253.0 229.1L251.7 229.2L250.5 229.5L249.1 230.0L247.7 230.8L246.5 231.7L245.3 232.7L244.1 233.7L243.0 234.7L241.9 235.7L240.9 236.9L239.9 238.1L238.9 239.3L238.0 240.5L237.0 241.7Z M301.8 233.9L301.3 233.1L300.8 232.2L300.2 231.4L299.6 230.5L298.9 229.6L298.0 228.9L296.8 228.3L295.6 227.9L294.3 227.6L292.9 227.4L291.6 227.2L290.2 227.2L288.5 227.3L286.8 227.5L285.0 227.9L283.2 228.4L281.4 229.0L279.7 229.9L278.0 231.0L276.3 232.2L274.8 233.7L273.3 235.2L272.0 236.9L270.8 238.6L269.7 240.4L268.8 242.3L267.9 244.3L267.2 246.4L266.8 248.5L266.6 250.6L266.6 252.4L266.8 254.2L267.2 255.9L267.8 257.6L268.6 259.2L269.6 260.6L270.9 262.0L272.3 263.2L273.9 264.3L275.6 265.1L277.3 265.8L279.0 266.4L280.7 266.7L282.5 266.9L284.3 266.9L286.0 266.9L287.6 266.7L289.2 266.5L290.7 266.4L292.3 266.1L293.8 265.8L295.4 265.4L296.8 264.9L298.2 264.2L299.2 263.3L300.0 262.4L300.7 261.4L301.4 260.4L301.9 259.4L302.5 258.5L303.1 257.4L303.6 256.2L304.2 255.0L304.7 253.8L305.2 252.7L305.7 251.6L306.4 250.2L307.0 248.9L307.7 247.5L308.4 246.2L309.2 244.9L310.0 243.6L310.8 242.1L311.7 240.7L312.6 239.3L313.5 238.0L314.4 236.9L315.4 235.9L316.4 235.0L317.5 234.2L318.6 233.5L319.8 232.9L320.9 232.5L322.0 232.2L323.1 232.1L324.3 232.1L325.4 232.2L326.4 232.4L327.3 232.7L327.8 233.0L328.2 233.4L328.7 234.0L329.2 234.8L329.6 235.6L330.0 236.6L330.3 237.4L330.5 238.3L330.6 239.3L330.6 240.4L330.5 241.7L330.4 242.9L330.2 244.2L329.9 245.6L329.6 247.1L329.2 248.6L328.6 250.0L328.1 251.4L327.4 252.7L326.7 254.0L325.9 255.2L325.0 256.4L324.1 257.5L323.1 258.5L322.0 259.4L320.7 260.4L319.4 261.2L317.9 262.0L316.4 262.7L315.0 263.3L313.6 263.7L312.5 263.9L311.4 264.0L310.3 264.0L309.3 263.9L308.2 263.7L307.3 263.5L306.6 263.2L305.8 262.8L305.1 262.3L304.3 261.8L303.5 261.2L302.6 260.6L301.6 262.0L302.2 262.7L302.9 263.4L303.6 264.1L304.4 264.8L305.3 265.5L306.3 266.1L307.5 266.6L308.7 266.9L310.0 267.1L311.4 267.2L312.8 267.2L314.2 267.1L315.9 266.8L317.7 266.3L319.5 265.7L321.3 265.0L323.0 264.1L324.6 263.2L326.1 262.1L327.5 261.0L328.8 259.8L330.0 258.5L331.2 257.1L332.2 255.7L333.2 254.1L334.0 252.4L334.8 250.7L335.5 248.9L336.0 247.1L336.4 245.4L336.7 243.8L336.9 242.2L337.0 240.6L336.9 238.9L336.7 237.2L336.3 235.6L335.8 234.2L335.1 232.8L334.2 231.5L333.2 230.2L332.0 229.1L330.6 228.2L329.0 227.5L327.3 227.2L325.7 227.2L324.1 227.2L322.5 227.5L321.0 227.8L319.4 228.3L317.9 228.9L316.4 229.6L315.0 230.5L313.7 231.5L312.4 232.5L311.1 233.8L309.9 235.2L308.8 236.8L307.8 238.3L306.9 239.8L306.0 241.2L305.2 242.7L304.5 244.1L303.8 245.6L303.1 247.0L302.5 248.4L301.9 249.8L301.4 251.1L300.9 252.4L300.5 253.6L300.2 254.8L299.8 255.9L299.3 256.9L298.9 257.9L298.5 258.9L298.1 259.9L297.7 260.7L297.2 261.3L296.6 261.8L295.7 262.3L294.6 262.6L293.3 262.8L291.9 263.0L290.4 263.0L289.0 263.1L287.5 263.1L285.9 263.1L284.4 263.0L283.0 262.8L281.6 262.5L280.4 262.0L279.2 261.4L278.0 260.7L276.9 259.9L275.9 258.9L275.0 258.0L274.4 257.2L274.0 256.3L273.6 255.3L273.2 254.2L273.0 253.1L272.9 251.9L272.8 250.8L272.9 249.4L273.2 247.9L273.6 246.2L274.2 244.6L274.9 242.9L275.6 241.4L276.4 240.0L277.4 238.6L278.5 237.2L279.7 235.9L280.9 234.7L282.1 233.7L283.3 232.9L284.7 232.2L286.1 231.6L287.6 231.0L289.0 230.6L290.4 230.4L291.6 230.3L292.7 230.3L293.8 230.4L294.9 230.5L295.9 230.8L296.8 231.1L297.5 231.4L298.2 231.9L298.9 232.5L299.7 233.1L300.4 233.8L301.2 234.5Z"/><ellipse cx="262.2" cy="206.1" rx="4.76" ry="2.73" transform="rotate(-43 262.2 206.1)"/></g>
<g fill="#efbc3c" opacity="0.8"><path d="M103.7 203.0L103.0 202.3L102.1 201.7L101.3 201.0L100.6 200.4L99.8 199.6L99.2 198.8L98.4 197.5L97.7 196.0L97.1 194.5L96.5 192.8L96.1 191.1L95.9 189.5L95.8 187.6L96.0 185.7L96.3 183.7L96.8 181.7L97.4 179.8L98.2 177.9L99.3 175.8L100.5 173.6L102.0 171.5L103.7 169.5L105.5 167.8L107.5 166.5L109.8 165.4L112.4 164.5L115.3 164.0L118.2 163.7L121.0 163.7L123.6 164.1L126.1 164.9L128.7 166.0L131.2 167.5L133.6 169.2L135.6 171.2L137.4 173.3L138.9 175.9L140.1 178.8L141.0 182.0L141.7 185.4L142.0 188.7L142.0 191.9L141.6 195.1L140.9 198.4L139.9 201.8L138.6 205.0L136.9 207.9L135.1 210.5L132.9 212.6L130.4 214.5L127.5 216.2L124.5 217.6L121.6 218.8L118.9 219.7L116.9 220.2L115.0 220.4L113.1 220.5L111.2 220.5L109.2 220.4L107.2 220.2L104.9 220.0L102.5 219.7L100.0 219.3L97.6 218.7L95.3 218.1L93.3 217.2L91.5 216.3L89.9 215.3L88.4 214.1L87.0 212.9L85.6 211.5L84.4 210.1L83.1 208.4L82.0 206.6L80.9 204.7L79.9 202.7L79.1 200.7L78.4 198.6L77.9 196.2L77.5 193.6L77.3 190.9L77.2 188.2L77.2 185.4L77.3 182.6L77.5 179.5L77.8 176.2L78.2 172.9L78.8 169.7L79.5 166.8L80.4 164.2L81.2 162.5L82.2 161.0L83.3 159.5L84.4 158.1L85.7 156.6L87.1 155.0L88.9 153.1L90.8 151.1L92.8 149.1L94.9 147.1L97.1 145.3L99.3 143.5L101.3 142.0L103.4 140.6L105.6 139.2L107.8 137.9L110.0 136.7L112.4 135.5L115.3 134.1L118.3 132.8L121.5 131.6L124.7 130.5L127.9 129.5L131.2 128.6L134.8 127.8L138.4 127.0L142.1 126.4L145.8 126.0L149.6 125.7L153.3 125.7L157.2 125.9L161.1 126.3L165.1 126.9L169.0 127.7L172.8 128.7L176.4 129.9L179.5 131.0L182.6 132.4L185.5 133.9L188.3 135.5L190.9 137.2L193.3 138.9L195.2 140.4L197.0 142.0L198.6 143.6L200.1 145.3L201.5 147.1L202.9 148.9L204.1 150.7L205.3 152.7L206.4 154.7L207.4 156.7L208.3 158.7L209.0 160.6L209.4 162.1L209.8 163.7L210.0 165.3L210.2 166.9L210.4 168.5L210.5 170.2L210.6 171.8L210.8 173.4L210.8 175.0L210.9 176.6L210.8 178.2L210.7 179.8L210.5 181.5L210.2 183.3L209.8 185.1L209.4 186.9L208.9 188.7L208.3 190.5L207.5 192.4L206.6 194.2L205.6 196.1L204.5 197.9L203.4 199.7L202.2 201.3L200.9 202.8L199.6 204.3L198.1 205.6L196.6 207.0L195.1 208.2L193.5 209.4L192.2 210.4L190.9 211.4L189.6 212.3L188.2 213.1L186.8 213.8L185.2 214.4L183.1 215.0L180.8 215.5L178.4 215.9L175.9 216.1L173.5 216.1L171.2 216.0L169.3 215.8L167.4 215.4L165.5 214.9L163.7 214.3L162.1 213.5L160.8 212.6L159.8 211.7L158.9 210.5L158.1 209.3L157.5 208.0L157.1 206.7L157.1 205.6L157.3 204.6L157.8 203.5L158.6 202.4L159.5 201.4L160.5 200.5L161.5 199.9L162.6 199.6L164.0 199.4L165.4 199.4L166.9 199.6L168.3 200.0L169.6 200.5L170.8 201.1L171.9 202.0L173.0 203.1L174.1 204.3L175.1 205.6L176.0 206.8L176.9 208.2L177.7 209.7L178.5 211.2L179.2 212.8L180.0 214.5L180.9 216.3L182.3 218.8L183.7 221.5L185.3 224.3L186.9 227.2L188.6 230.0L190.3 232.9L192.3 235.8L194.4 238.8L196.6 241.8L198.8 244.8L200.9 247.7L202.9 250.5L204.6 253.0L206.1 255.3L207.6 257.6L209.1 259.9L210.6 262.2L212.1 264.6L213.7 267.0L215.3 269.4L216.9 271.9L218.4 274.3L220.0 276.8L221.6 279.1L223.0 281.3L224.4 283.4L225.8 285.4L227.2 287.5L228.6 289.5L230.0 291.7L231.4 294.0L232.9 296.3L234.3 298.7L235.8 301.1L237.4 303.6L239.2 306.2L241.8 309.7L244.6 313.3L247.7 317.1L250.8 320.8L253.9 324.4L256.9 327.6L259.3 330.2L261.6 332.6L263.9 334.9L266.2 337.1L268.7 339.3L271.2 341.4L274.1 343.8L277.1 346.2L280.3 348.6L283.5 350.8L286.9 352.8L290.4 354.4L294.2 355.5L298.1 356.3L302.1 356.8L306.2 357.1L310.2 357.2L314.2 357.0L318.2 356.7L322.2 356.3L326.3 355.6L330.3 354.6L334.2 353.3L337.9 351.7L341.4 349.8L344.9 347.5L348.2 344.9L351.3 342.1L354.1 339.0L356.5 335.8L358.5 332.2L360.1 328.3L361.5 324.2L362.5 320.1L363.2 316.0L363.5 312.0L363.6 308.3L363.5 304.6L363.0 301.0L362.3 297.4L361.2 293.9L359.9 290.7L358.2 287.6L356.2 284.6L353.9 281.7L351.4 279.1L348.6 276.8L345.6 274.9L342.1 273.3L338.2 272.2L334.1 271.4L329.9 270.9L325.8 270.8L321.8 271.0L318.1 271.4L314.2 272.3L310.4 273.4L306.8 274.7L303.5 276.2L300.8 277.6L299.3 278.6L298.0 279.5L296.8 280.5L295.8 281.6L294.8 282.8L293.8 284.2L292.5 286.1L291.3 288.2L290.1 290.6L289.0 293.0L288.1 295.5L287.5 297.9L287.2 300.2L287.0 302.5L287.0 304.8L287.2 307.2L287.5 309.4L288.2 311.6L289.0 313.7L290.2 315.8L291.5 317.8L293.0 319.7L294.6 321.4L296.3 322.9L298.2 324.3L300.2 325.5L302.3 326.5L304.5 327.4L306.7 328.1L308.9 328.6L311.0 328.8L313.2 328.9L315.3 328.7L317.5 328.4L319.5 328.0L321.5 327.3L323.4 326.5L325.3 325.6L327.1 324.5L328.8 323.2L330.3 321.8L331.5 320.3L332.5 318.8L333.3 317.2L333.9 315.4L334.3 313.6L334.6 311.9L334.6 310.2L334.5 308.6L334.2 307.0L333.8 305.5L333.1 303.9L332.4 302.5L331.5 301.3L330.3 300.1L328.9 299.0L327.4 298.1L325.8 297.3L324.2 296.7L322.6 296.3L321.2 296.1L319.8 296.1L318.5 296.3L317.1 296.6L315.8 296.8L314.5 297.0L314.5 297.6L315.9 297.5L317.2 297.3L318.6 297.1L319.9 297.0L321.2 297.0L322.4 297.1L323.9 297.6L325.4 298.2L326.9 298.9L328.4 299.8L329.7 300.8L330.7 301.9L331.5 303.1L332.2 304.4L332.8 305.8L333.2 307.3L333.5 308.8L333.6 310.2L333.5 311.8L333.3 313.4L332.9 315.1L332.3 316.8L331.5 318.3L330.7 319.7L329.5 321.0L328.1 322.3L326.5 323.5L324.7 324.6L322.9 325.5L321.1 326.3L319.2 326.9L317.3 327.3L315.2 327.6L313.1 327.7L311.1 327.7L309.1 327.4L307.0 327.0L304.9 326.3L302.8 325.5L300.7 324.5L298.8 323.3L297.1 322.1L295.4 320.6L293.9 318.9L292.4 317.1L291.1 315.2L290.1 313.2L289.2 311.2L288.7 309.2L288.3 307.0L288.1 304.8L288.1 302.5L288.3 300.3L288.7 298.1L289.2 295.8L290.1 293.4L291.1 291.1L292.3 288.8L293.5 286.7L294.8 284.8L295.8 283.6L296.7 282.5L297.7 281.5L298.8 280.5L300.0 279.7L301.4 278.8L304.1 277.4L307.3 276.0L310.8 274.8L314.6 273.7L318.3 272.9L322.0 272.4L325.8 272.3L329.8 272.5L333.9 272.9L337.8 273.7L341.5 274.8L344.8 276.3L347.6 278.1L350.2 280.4L352.5 282.9L354.7 285.7L356.6 288.6L358.1 291.5L359.4 294.6L360.3 297.9L361.0 301.3L361.4 304.8L361.5 308.3L361.5 311.8L361.1 315.7L360.4 319.7L359.4 323.7L358.2 327.6L356.6 331.3L354.7 334.6L352.5 337.7L349.8 340.6L346.9 343.3L343.7 345.8L340.3 348.0L336.9 349.9L333.4 351.4L329.7 352.6L325.9 353.5L321.9 354.2L318.0 354.7L314.0 355.0L310.2 355.1L306.2 355.1L302.3 354.8L298.4 354.3L294.7 353.6L291.2 352.4L287.9 350.9L284.7 349.0L281.6 346.8L278.6 344.4L275.6 342.0L272.8 339.6L270.3 337.4L267.9 335.3L265.6 333.1L263.3 330.9L261.1 328.5L258.7 326.0L255.8 322.7L252.7 319.2L249.6 315.5L246.6 311.8L243.8 308.2L241.2 304.8L239.5 302.3L237.9 299.8L236.4 297.4L234.9 295.0L233.5 292.7L232.0 290.3L230.6 288.2L229.1 286.1L227.7 284.1L226.3 282.0L224.9 280.0L223.4 277.9L221.9 275.5L220.3 273.1L218.7 270.7L217.1 268.3L215.5 265.8L213.9 263.4L212.3 261.1L210.8 258.8L209.3 256.5L207.7 254.2L206.1 251.9L204.5 249.5L202.4 246.6L200.3 243.7L198.0 240.8L195.8 237.8L193.7 234.9L191.7 231.9L189.9 229.2L188.2 226.4L186.6 223.6L185.0 220.8L183.5 218.1L182.1 215.7L181.2 214.0L180.4 212.3L179.6 210.7L178.8 209.1L177.9 207.6L177.0 206.2L176.0 204.9L174.9 203.6L173.8 202.4L172.6 201.2L171.3 200.3L170.0 199.5L168.6 199.0L167.1 198.7L165.5 198.5L163.9 198.5L162.4 198.6L161.1 199.1L160.0 199.7L158.8 200.7L157.8 201.8L157.0 203.0L156.4 204.3L156.1 205.6L156.2 206.9L156.6 208.3L157.3 209.7L158.1 211.1L159.1 212.3L160.2 213.4L161.6 214.4L163.3 215.2L165.2 215.8L167.1 216.3L169.2 216.7L171.2 217.0L173.5 217.1L175.9 217.1L178.5 216.9L181.0 216.6L183.4 216.2L185.6 215.6L187.3 215.0L188.8 214.2L190.3 213.4L191.7 212.5L193.1 211.6L194.5 210.6L196.1 209.5L197.7 208.3L199.3 207.0L200.9 205.7L202.4 204.2L203.8 202.7L205.2 201.0L206.5 199.2L207.7 197.3L208.8 195.4L209.8 193.5L210.7 191.5L211.5 189.7L212.2 187.8L212.8 185.9L213.4 184.0L213.8 182.1L214.1 180.2L214.3 178.4L214.4 176.7L214.4 174.9L214.3 173.2L214.2 171.5L214.1 169.8L213.9 168.2L213.8 166.5L213.5 164.8L213.2 163.0L212.8 161.2L212.2 159.4L211.4 157.3L210.4 155.2L209.2 153.1L207.9 151.1L206.6 149.1L205.1 147.1L203.6 145.3L202.1 143.5L200.4 141.8L198.6 140.2L196.7 138.6L194.7 137.1L192.1 135.4L189.3 133.7L186.4 132.1L183.4 130.7L180.2 129.3L177.0 128.1L173.3 127.0L169.4 126.0L165.4 125.2L161.3 124.6L157.3 124.1L153.3 123.9L149.5 123.9L145.7 124.2L141.9 124.7L138.1 125.3L134.4 126.0L130.8 126.8L127.4 127.7L124.1 128.7L120.8 129.8L117.6 131.0L114.5 132.2L111.6 133.5L109.1 134.7L106.7 135.9L104.4 137.2L102.1 138.5L99.9 140.0L97.7 141.5L95.4 143.2L93.2 145.1L90.9 147.0L88.8 149.0L86.8 151.0L84.9 153.0L83.5 154.5L82.1 156.0L80.8 157.5L79.5 159.1L78.4 160.9L77.4 163.0L76.3 165.8L75.5 169.0L74.9 172.4L74.4 175.8L74.1 179.2L73.9 182.4L73.8 185.3L73.9 188.2L74.0 191.2L74.3 194.0L74.8 196.8L75.6 199.4L76.4 201.7L77.5 203.9L78.6 206.0L79.9 208.0L81.3 209.8L82.8 211.5L84.3 212.9L85.8 214.3L87.4 215.5L89.1 216.5L90.9 217.5L92.7 218.4L95.0 219.2L97.4 219.8L99.8 220.3L102.3 220.7L104.8 221.0L107.2 221.2L109.2 221.4L111.1 221.5L113.1 221.5L115.1 221.4L117.1 221.2L119.1 220.7L121.9 219.8L124.9 218.6L128.0 217.1L130.9 215.4L133.6 213.4L135.9 211.1L137.8 208.5L139.5 205.4L140.9 202.1L141.9 198.7L142.7 195.3L143.0 191.9L143.0 188.6L142.7 185.2L142.1 181.8L141.1 178.5L139.8 175.4L138.2 172.7L136.4 170.5L134.2 168.4L131.8 166.6L129.2 165.1L126.5 163.9L123.8 163.1L121.1 162.7L118.1 162.6L115.1 162.9L112.2 163.5L109.4 164.4L106.9 165.5L104.9 167.0L102.9 168.8L101.2 170.9L99.7 173.1L98.3 175.3L97.2 177.5L96.4 179.4L95.8 181.5L95.3 183.5L95.0 185.6L94.9 187.6L94.9 189.5L95.2 191.3L95.6 193.1L96.2 194.8L97.0 196.4L97.7 197.9L98.6 199.2L99.3 200.1L100.1 200.9L101.0 201.5L101.8 202.1L102.6 202.7L103.5 203.4Z M79.0 268.4L79.8 268.6L80.6 268.8L81.4 268.9L82.2 269.1L83.1 269.2L84.0 269.3L85.2 269.4L86.5 269.5L87.8 269.5L89.2 269.5L90.6 269.5L91.9 269.5L93.5 269.6L95.1 269.6L96.8 269.7L98.5 269.8L100.2 269.8L101.9 269.9L103.6 269.9L105.3 270.0L107.1 270.0L108.8 270.0L110.4 270.0L112.0 269.9L113.3 269.9L114.4 269.8L115.5 269.8L116.7 269.7L117.9 269.5L119.3 269.4L122.0 269.0L125.0 268.6L128.3 268.2L131.7 267.6L135.0 266.8L138.1 265.9L141.0 264.8L143.9 263.6L146.6 262.1L149.3 260.7L152.0 259.2L154.5 257.7L156.8 256.4L159.0 255.0L161.1 253.6L163.2 252.2L165.2 250.8L167.4 249.5L167.0 248.9L164.9 250.3L162.8 251.6L160.7 253.0L158.5 254.3L156.3 255.6L154.1 256.9L151.5 258.4L148.9 259.9L146.2 261.3L143.5 262.7L140.7 264.0L137.9 265.1L134.8 266.0L131.5 266.7L128.2 267.4L124.9 267.9L121.9 268.3L119.3 268.6L117.9 268.8L116.6 268.9L115.5 269.0L114.4 269.0L113.2 269.1L112.0 269.1L110.4 269.0L108.8 268.9L107.1 268.7L105.4 268.5L103.7 268.3L102.1 268.1L100.4 267.9L98.8 267.6L97.1 267.2L95.4 266.9L93.7 266.7L92.1 266.5L90.6 266.4L89.2 266.4L87.8 266.4L86.5 266.5L85.2 266.5L84.0 266.7L83.1 266.8L82.2 266.9L81.4 267.1L80.6 267.2L79.8 267.4L79.0 267.6Z M117.2 268.7L119.9 266.6L122.7 264.5L125.5 262.3L128.2 260.2L130.9 257.8L133.6 255.3L136.5 252.1L139.5 248.6L142.3 244.9L145.1 241.2L147.7 237.6L150.1 234.3L151.8 231.8L153.4 229.6L154.8 227.4L156.3 225.1L157.7 222.6L159.3 219.8L161.9 214.5L164.5 208.5L167.2 201.9L170.0 195.1L172.9 188.4L175.8 182.1L178.9 176.2L182.1 170.3L185.4 164.4L188.7 158.7L191.8 153.6L194.6 149.2L196.2 146.8L197.5 144.8L198.8 142.9L200.1 141.1L201.6 139.4L203.3 137.6L206.0 135.2L209.0 132.8L212.3 130.4L215.7 128.2L219.2 126.1L222.7 124.3L226.2 122.7L229.7 121.4L233.2 120.2L236.9 119.2L240.6 118.2L244.4 117.4L248.6 116.6L253.0 115.8L257.5 115.2L261.9 114.8L266.2 114.6L270.2 114.6L273.2 114.9L276.2 115.3L279.1 115.9L281.8 116.6L284.5 117.5L287.0 118.6L289.5 119.8L291.9 121.2L294.2 122.7L296.3 124.4L298.1 126.2L299.6 128.1L300.7 130.2L301.6 132.5L302.3 135.0L302.8 137.6L303.0 140.1L302.8 142.6L302.4 145.1L301.6 147.7L300.5 150.3L299.1 152.8L297.5 155.2L295.7 157.3L293.2 159.4L290.4 161.3L287.2 162.9L283.7 164.4L280.2 165.8L276.5 167.0L272.2 168.2L267.7 169.1L262.9 169.8L258.1 170.3L253.2 170.9L248.5 171.6L248.5 172.2L253.3 171.6L258.2 171.1L263.0 170.7L267.8 170.1L272.5 169.3L276.9 168.2L280.6 167.0L284.2 165.6L287.8 164.2L291.1 162.5L294.1 160.5L296.7 158.3L298.7 156.1L300.5 153.7L302.0 151.1L303.3 148.3L304.2 145.6L304.8 142.8L305.0 140.1L304.8 137.4L304.4 134.6L303.7 131.8L302.7 129.3L301.4 126.9L299.8 124.7L297.8 122.7L295.5 120.9L293.0 119.3L290.5 117.8L288.0 116.6L285.3 115.4L282.5 114.5L279.6 113.8L276.6 113.2L273.5 112.8L270.2 112.6L266.1 112.5L261.8 112.8L257.2 113.3L252.7 114.0L248.3 114.9L244.0 115.8L240.2 116.7L236.5 117.8L232.8 118.9L229.2 120.2L225.7 121.7L222.3 123.3L218.7 125.2L215.2 127.4L211.7 129.7L208.4 132.1L205.4 134.6L202.7 137.0L200.9 138.8L199.4 140.6L198.0 142.3L196.7 144.2L195.3 146.3L193.8 148.6L190.9 153.1L187.8 158.2L184.5 163.8L181.2 169.8L178.0 175.8L175.0 181.7L172.0 188.0L169.1 194.7L166.4 201.5L163.7 208.1L161.0 214.2L158.5 219.4L157.0 222.2L155.5 224.7L154.1 226.9L152.6 229.1L151.1 231.3L149.3 233.7L146.9 237.1L144.4 240.7L141.6 244.4L138.8 248.1L135.9 251.5L133.0 254.7L130.4 257.2L127.7 259.6L125.0 261.8L122.3 263.9L119.5 266.1L116.8 268.3Z M237.4 242.1L238.5 241.1L239.6 240.0L240.7 238.9L241.9 237.9L243.0 236.9L244.1 236.0L245.3 235.1L246.5 234.3L247.7 233.5L248.9 232.8L250.0 232.2L251.1 231.9L252.0 231.8L252.9 231.8L253.9 231.9L254.7 232.1L255.4 232.3L255.9 232.7L256.2 233.1L256.5 233.7L256.7 234.4L256.9 235.2L256.9 236.1L257.0 237.0L256.9 238.1L256.6 239.3L256.3 240.6L255.9 241.9L255.4 243.2L254.9 244.6L254.3 246.0L253.6 247.5L252.8 249.0L252.0 250.5L251.2 252.0L250.4 253.4L249.8 254.7L249.0 256.0L248.2 257.4L247.5 258.7L246.9 260.1L246.8 261.4L246.9 262.4L247.1 263.3L247.5 264.2L248.0 265.0L248.6 265.7L249.3 266.3L250.5 266.7L251.9 266.8L253.4 266.8L255.0 266.7L256.6 266.4L258.0 266.2L259.5 265.8L261.0 265.4L262.4 264.8L263.8 264.2L265.1 263.7L266.4 263.2L267.2 262.9L268.1 262.6L268.8 262.3L269.6 262.0L270.4 261.7L271.2 261.4L270.8 260.6L270.1 260.8L269.3 261.1L268.5 261.4L267.7 261.6L266.9 261.9L266.0 262.2L264.8 262.7L263.4 263.2L262.0 263.8L260.6 264.3L259.2 264.7L257.8 265.0L256.4 265.2L254.9 265.4L253.4 265.5L252.0 265.5L250.9 265.3L250.1 264.9L249.7 264.6L249.4 264.1L249.1 263.5L248.9 262.8L248.8 262.2L248.8 261.6L249.0 260.7L249.5 259.7L250.2 258.5L251.0 257.2L251.8 255.9L252.6 254.6L253.3 253.1L254.1 251.6L255.0 250.1L255.8 248.6L256.5 247.0L257.1 245.4L257.6 244.0L258.1 242.6L258.5 241.2L258.8 239.7L259.0 238.3L259.0 237.0L259.0 236.0L258.8 234.9L258.6 233.9L258.3 233.0L257.8 232.1L257.1 231.3L256.2 230.8L255.2 230.4L254.1 230.2L252.9 230.2L251.8 230.3L250.7 230.5L249.5 230.9L248.2 231.6L247.0 232.4L245.8 233.3L244.6 234.3L243.5 235.2L242.3 236.2L241.3 237.3L240.2 238.4L239.2 239.6L238.2 240.7L237.2 241.9Z M301.6 234.1L301.0 233.3L300.4 232.5L299.9 231.7L299.2 230.9L298.5 230.1L297.6 229.5L296.6 229.0L295.4 228.6L294.2 228.4L292.9 228.2L291.6 228.1L290.2 228.1L288.7 228.3L287.0 228.5L285.3 228.9L283.6 229.5L281.9 230.2L280.4 231.0L278.8 232.0L277.3 233.3L275.8 234.7L274.5 236.2L273.3 237.8L272.2 239.4L271.2 241.1L270.3 242.9L269.5 244.9L268.9 246.8L268.5 248.8L268.4 250.7L268.4 252.3L268.6 253.8L268.9 255.4L269.5 256.9L270.1 258.3L271.0 259.6L272.1 260.9L273.3 262.0L274.8 263.0L276.3 263.8L277.8 264.6L279.4 265.1L281.0 265.5L282.6 265.7L284.3 265.8L286.0 265.8L287.6 265.7L289.2 265.5L290.6 265.4L292.2 265.2L293.7 265.0L295.2 264.6L296.5 264.2L297.7 263.5L298.6 262.8L299.4 261.9L300.0 261.0L300.5 260.0L301.1 259.0L301.6 258.0L302.1 256.9L302.7 255.8L303.1 254.6L303.6 253.4L304.1 252.2L304.6 251.1L305.3 249.7L305.9 248.4L306.6 247.0L307.3 245.6L308.0 244.2L308.8 242.9L309.7 241.5L310.6 240.0L311.5 238.6L312.5 237.2L313.5 236.0L314.6 234.9L315.6 234.0L316.8 233.2L318.0 232.4L319.2 231.8L320.5 231.3L321.7 231.0L322.9 230.8L324.2 230.7L325.5 230.7L326.7 230.9L327.7 231.2L328.6 231.6L329.3 232.2L330.0 232.9L330.6 233.8L331.2 234.8L331.7 235.9L332.0 236.9L332.3 238.0L332.4 239.2L332.4 240.5L332.3 241.8L332.2 243.2L332.0 244.6L331.7 246.1L331.3 247.6L330.8 249.2L330.2 250.7L329.5 252.2L328.8 253.6L328.0 254.9L327.1 256.1L326.1 257.3L325.0 258.5L323.9 259.5L322.7 260.5L321.4 261.4L319.9 262.3L318.4 263.1L316.8 263.8L315.2 264.3L313.8 264.7L312.6 264.8L311.4 264.9L310.2 264.9L309.1 264.7L308.0 264.5L307.0 264.2L306.2 263.9L305.4 263.4L304.7 262.8L303.9 262.2L303.1 261.6L302.3 261.0L301.9 261.6L302.6 262.2L303.3 262.9L304.0 263.6L304.8 264.3L305.6 264.9L306.6 265.4L307.7 265.7L308.9 266.0L310.1 266.2L311.4 266.3L312.7 266.3L314.0 266.1L315.6 265.8L317.3 265.3L319.1 264.7L320.7 263.9L322.4 263.0L323.9 262.1L325.2 261.1L326.5 260.0L327.7 258.8L328.8 257.5L329.9 256.2L330.8 254.8L331.7 253.3L332.5 251.7L333.2 250.1L333.8 248.4L334.3 246.7L334.6 245.0L334.9 243.6L335.1 242.1L335.1 240.5L335.1 239.0L334.9 237.5L334.6 236.1L334.1 234.8L333.5 233.6L332.8 232.4L331.9 231.3L330.9 230.3L329.8 229.6L328.5 229.0L327.1 228.7L325.6 228.6L324.1 228.6L322.7 228.8L321.3 229.0L319.9 229.5L318.4 230.0L317.1 230.7L315.7 231.6L314.4 232.5L313.2 233.5L312.0 234.7L310.9 236.0L309.9 237.5L308.9 239.0L308.0 240.5L307.2 241.9L306.4 243.3L305.6 244.7L304.9 246.1L304.2 247.6L303.6 249.0L303.0 250.3L302.5 251.6L302.0 252.8L301.6 254.0L301.2 255.2L300.7 256.3L300.2 257.4L299.8 258.4L299.3 259.4L298.8 260.3L298.3 261.2L297.8 261.9L297.1 262.5L296.1 263.0L294.8 263.4L293.5 263.7L292.0 263.9L290.5 264.0L289.0 264.1L287.5 264.1L285.9 264.1L284.4 264.1L282.8 264.0L281.4 263.7L280.0 263.3L278.7 262.7L277.3 262.0L276.0 261.1L274.9 260.2L273.8 259.2L273.0 258.2L272.4 257.1L271.9 256.0L271.5 254.7L271.2 253.4L271.1 252.1L271.0 250.7L271.2 249.2L271.5 247.5L272.0 245.7L272.6 243.9L273.4 242.2L274.2 240.6L275.2 239.1L276.2 237.6L277.4 236.2L278.7 234.8L280.1 233.6L281.4 232.6L282.8 231.8L284.2 231.1L285.8 230.5L287.3 230.0L288.9 229.7L290.4 229.5L291.6 229.4L292.8 229.4L294.0 229.6L295.1 229.8L296.2 230.1L297.2 230.5L297.9 230.9L298.6 231.5L299.3 232.2L300.0 232.9L300.7 233.6L301.4 234.3Z"/><ellipse cx="262.2" cy="206.1" rx="2.04" ry="1.17" transform="rotate(-43 262.2 206.1)"/></g>
</svg>
</div>
<!-- header -->
<div class="t" style="left:5px;top:3.5px;font-size:9.6px;font-weight:bold;color:#111">Production Worksheet</div>
<div class="t" style="left:5px;top:16.7px">Wilcom EmbroideryStudio – Level 3 Advanced</div>
<svg style="position:absolute;left:0;top:0" width="100" height="45">
<rect x="5.5" y="25" width="1.0" height="13" fill="#aaa"/><rect x="8.0" y="25" width="3.8" height="13" fill="#333"/><rect x="13.0" y="25" width="1.8" height="13" fill="#222"/><rect x="14.8" y="25" width="1.2" height="13" fill="#888"/><rect x="16.0" y="25" width="1.8" height="13" fill="#222"/><rect x="19.0" y="25" width="1.5" height="13" fill="#777"/><rect x="20.5" y="25" width="2.0" height="13" fill="#111"/><rect x="24.0" y="25" width="2.0" height="13" fill="#222"/><rect x="26.8" y="25" width="2.2" height="13" fill="#222"/><rect x="29.0" y="25" width="1.8" height="13" fill="#333"/><rect x="32.0" y="25" width="1.0" height="13" fill="#999"/><rect x="34.0" y="25" width="1.8" height="13" fill="#222"/><rect x="35.8" y="25" width="1.0" height="13" fill="#777"/><rect x="36.8" y="25" width="1.2" height="13" fill="#111"/><rect x="40.0" y="25" width="1.5" height="13" fill="#999"/><rect x="43.0" y="25" width="1.0" height="13" fill="#111"/><rect x="44.0" y="25" width="2.5" height="13" fill="#444"/><rect x="48.0" y="25" width="1.8" height="13" fill="#222"/><rect x="51.2" y="25" width="1.8" height="13" fill="#111"/><rect x="53.0" y="25" width="1.5" height="13" fill="#888"/><rect x="60.0" y="25" width="2.0" height="13" fill="#222"/><rect x="63.5" y="25" width="2.5" height="13" fill="#333"/><rect x="66.0" y="25" width="1.5" height="13" fill="#bbb"/><rect x="67.8" y="25" width="2.0" height="13" fill="#111"/><rect x="71.8" y="25" width="1.2" height="13" fill="#111"/><rect x="74.0" y="25" width="2.0" height="13" fill="#666"/><rect x="76.0" y="25" width="1.8" height="13" fill="#222"/><rect x="79.0" y="25" width="2.0" height="13" fill="#444"/><rect x="83.5" y="25" width="1.5" height="13" fill="#222"/><rect x="85.0" y="25" width="2.0" height="13" fill="#333"/><circle cx="57.6" cy="37.3" r="0.95" fill="#111"/><path d="M58.4 37.4 Q58.4 39.4 57 40.4" stroke="#333" stroke-width="0.9" fill="none"/>
</svg>
<div class="t" style="left:5px;top:42.4px">Design:</div>
<div class="t" style="left:37px;top:42.4px">RICO 5,8IN</div>
<div class="t" style="left:5px;top:51.1px">Colorway:</div>
<div class="t" style="left:37px;top:51.1px">Colorway 1</div>
<!-- top right -->
<div class="t" style="left:547.5px;top:4.3px">Stitches:</div><div class="t" style="left:576px;top:4.3px">6324</div>
<div class="t" style="left:547.5px;top:13.3px">Colors:</div><div class="t" style="left:576px;top:13.3px">1</div>
<div class="t" style="left:547.5px;top:22.3px">Height:</div><div class="t" style="left:576px;top:22.3px">4.91 in</div>
<div class="t" style="left:547.5px;top:31.3px">Width:</div><div class="t" style="left:576px;top:31.3px">5.81 in</div>
<div class="t" style="left:547.5px;top:40.3px">Zoom:</div><div class="t" style="left:576px;top:40.3px">1:1</div>
<!-- right panel -->
<div class="t" style="left:436px;top:61.0px">Machine:</div><div class="t" style="left:484px;top:61.0px">Tajima</div>
<div class="t" style="left:436px;top:70.0px">Color changes:</div><div class="t" style="left:484px;top:70.0px">0</div>
<div class="t" style="left:436px;top:79.0px">Stops:</div><div class="t" style="left:484px;top:79.0px">1</div>
<div class="t" style="left:436px;top:88.0px">Trims:</div><div class="t" style="left:484px;top:88.0px">3</div>
<div class="t" style="left:436px;top:97.0px">Left:</div><div class="t" style="left:484px;top:97.0px">73.8 mm</div>
<div class="t" style="left:436px;top:106.0px">Right:</div><div class="t" style="left:484px;top:106.0px">73.8 mm</div>
<div class="t" style="left:436px;top:115.0px">Up:</div><div class="t" style="left:484px;top:115.0px">62.3 mm</div>
<div class="t" style="left:436px;top:124.0px">Down:</div><div class="t" style="left:484px;top:124.0px">62.3 mm</div>
<div class="t" style="left:436px;top:133.0px">EndX:</div><div class="t" style="left:484px;top:133.0px">0.00 in</div>
<div class="t" style="left:436px;top:142.0px">EndY:</div><div class="t" style="left:484px;top:142.0px">0.00 in</div>
<div class="t" style="left:436px;top:151.0px">Max Stitch:</div><div class="t" style="left:484px;top:151.0px">6.8 mm</div>
<div class="t" style="left:436px;top:160.0px">Min Stitch:</div><div class="t" style="left:484px;top:160.0px">0.5 mm</div>
<div class="t" style="left:436px;top:169.0px">Max Jump:</div><div class="t" style="left:484px;top:169.0px">6.8 mm</div>
<div class="t" style="left:436px;top:178.0px">Total Bobbin:</div><div class="t" style="left:484px;top:178.0px">45.07ft</div>

<div class="t" style="left:436px;top:187px">Stop Sequence:</div>
<div class="t u" style="left:436px;top:195.5px">#</div>
<div class="t u" style="left:444px;top:195.5px">N#</div>
<div class="t u" style="left:468.5px;top:195.5px">St.</div>
<div class="t u" style="left:480.2px;top:195.5px">Description</div>
<div class="t u" style="left:520.3px;top:195.5px">Code</div>
<div class="t u" style="left:540px;top:195.5px">Brand</div>
<div class="t" style="left:436px;top:205px">1.</div>
<div class="t" style="left:444px;top:205px">1</div>
<div style="position:absolute;left:455px;top:204px;width:5px;height:5px;background:#f08c1e"></div>
<div class="t" style="left:462.7px;top:205px">6322</div>
<div class="t" style="left:522.5px;top:205px">1137</div>
<div class="t" style="left:540px;top:205px">Madeira Classic 40</div>
<!-- footer -->
<div class="t" style="left:5px;top:414.3px">Created By:</div>
<div class="t" style="left:149.6px;top:414.3px">Last Saved: 22/05/2022 21:40:05</div>
<div class="t" style="left:356px;top:414.3px">Printed: 22/05/2022 21:40:07</div>
<div class="t" style="left:563px;top:414.3px">Page 1 of 1</div>
</body></html>
